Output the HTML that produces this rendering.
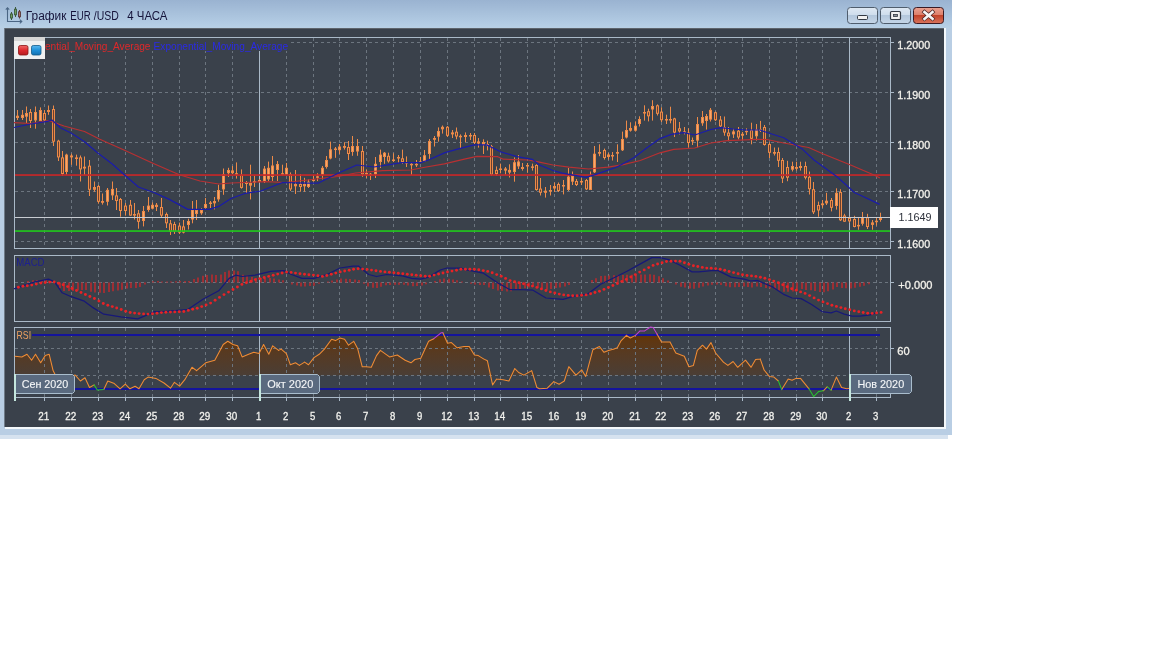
<!DOCTYPE html><html><head><meta charset="utf-8"><style>html,body{margin:0;padding:0;background:#fff;width:1152px;height:648px;overflow:hidden}svg{position:absolute;left:0;top:0;display:block;filter:blur(0.4px)}</style></head><body><svg width="1152" height="648" viewBox="0 0 1152 648"><defs><linearGradient id="tg" x1="0" y1="0" x2="0" y2="1"><stop offset="0" stop-color="#9ab3d1"/><stop offset="0.85" stop-color="#b3cce4"/><stop offset="1" stop-color="#b8d0e6"/></linearGradient><linearGradient id="bb" x1="0" y1="0" x2="0" y2="1"><stop offset="0" stop-color="#dfe9f3"/><stop offset="0.5" stop-color="#cddcec"/><stop offset="0.5" stop-color="#b3c7dc"/><stop offset="1" stop-color="#c5d6e8"/></linearGradient><linearGradient id="cb" x1="0" y1="0" x2="0" y2="1"><stop offset="0" stop-color="#eaa190"/><stop offset="0.5" stop-color="#dc7d68"/><stop offset="0.5" stop-color="#c2432a"/><stop offset="1" stop-color="#d9745c"/></linearGradient></defs><rect x="0" y="435" width="948" height="4" fill="#d6e2ef"/><rect x="0" y="0" width="952" height="435" fill="#b9cee4"/><rect x="0" y="0" width="952" height="28" fill="url(#tg)"/><rect x="944" y="28" width="2" height="401" fill="#f4f8fb"/><rect x="5" y="427" width="941" height="2" fill="#f4f8fb"/><rect x="5" y="28" width="939" height="399" fill="#3a414b"/><rect x="4" y="28" width="1" height="399" fill="#6f7b88"/><rect x="5" y="28" width="939" height="1" fill="#5d646c"/><rect x="847.5" y="7.5" width="30" height="16" rx="3" fill="url(#bb)" stroke="#4f5d6d" stroke-width="1"/><rect x="880.5" y="7.5" width="30" height="16" rx="3" fill="url(#bb)" stroke="#4f5d6d" stroke-width="1"/><rect x="913.5" y="7.5" width="30" height="16" rx="3" fill="url(#cb)" stroke="#3a1a22" stroke-width="1"/><rect x="857.5" y="15.5" width="10" height="4" rx="1" fill="#f2f2f2" stroke="#333a44" stroke-width="1"/><rect x="890.5" y="11.5" width="10" height="8" rx="1" fill="#f2f2f2" stroke="#333a44" stroke-width="1.2"/><rect x="893.5" y="14.5" width="4" height="2" fill="#8a9099" stroke="#333a44" stroke-width="0.8"/><path d="M924.5 12 L932.5 18.8 M932.5 12 L924.5 18.8" stroke="#4a2424" stroke-width="4" stroke-linecap="square"/><path d="M924.5 12 L932.5 18.8 M932.5 12 L924.5 18.8" stroke="#f6f6f6" stroke-width="2.6" stroke-linecap="square"/><path d="M7.5 8 V21.5 H21.5" fill="none" stroke="#4a6584" stroke-width="1.1"/><path d="M5.8 9.6 L7.5 7.7 L9.2 9.6 M19.8 19.7 L21.8 21.5 L19.8 23.3" fill="none" stroke="#4a6584" stroke-width="1.1"/><rect x="11" y="12" width="1" height="8" fill="#3d5a3d"/><rect x="10.5" y="14" width="2" height="4" fill="#6fa060" stroke="#3d5a3d" stroke-width="0.9"/><rect x="15" y="7" width="1" height="10" fill="#3d5a3d"/><rect x="14.5" y="9.2" width="2" height="5.6" fill="#6fa060" stroke="#3d5a3d" stroke-width="0.9"/><rect x="19" y="10" width="1" height="8.5" fill="#5a3a3a"/><rect x="18.5" y="11.8" width="2" height="5" fill="#b07068" stroke="#5a3a3a" stroke-width="0.9"/><text x="25.8" y="19.6" font-family="Liberation Sans" font-size="12" fill="#15133a" textLength="40.6" lengthAdjust="spacingAndGlyphs">График</text><text x="70.3" y="19.6" font-family="Liberation Sans" font-size="12" fill="#15133a" textLength="20.3" lengthAdjust="spacingAndGlyphs">EUR</text><text x="93.8" y="19.6" font-family="Liberation Sans" font-size="12" fill="#15133a" textLength="25" lengthAdjust="spacingAndGlyphs">/USD</text><text x="127.3" y="19.6" font-family="Liberation Sans" font-size="12" fill="#15133a" textLength="40.2" lengthAdjust="spacingAndGlyphs">4 ЧАСА</text><rect x="14.5" y="37.5" width="876" height="211" fill="none" stroke="#aab9c8" stroke-width="1"/><rect x="14.5" y="255.5" width="876" height="66" fill="none" stroke="#aab9c8" stroke-width="1"/><rect x="14.5" y="327.5" width="876" height="70" fill="none" stroke="#aab9c8" stroke-width="1"/><defs><linearGradient id="rg" gradientUnits="userSpaceOnUse" x1="0" y1="334" x2="0" y2="376"><stop offset="0" stop-color="#633508"/><stop offset="0.45" stop-color="#573a22"/><stop offset="1" stop-color="#4a3e36"/></linearGradient></defs><path d="M15.0 375.5 L15.0 356.2 L21.8 357.0 L27.0 354.3 L31.6 360.2 L35.5 354.3 L40.7 362.8 L45.2 355.6 L49.2 354.3 L53.1 370.6 L55.7 375.5 L62.0 375.5 L68.0 375.5 L75.2 375.1 L80.4 375.5 L85.0 375.5 L89.5 375.5 L94.1 375.5 L97.3 375.5 L103.8 375.5 L107.8 375.5 L114.3 375.5 L120.1 375.5 L125.3 375.5 L129.9 375.5 L135.1 375.5 L139.0 375.5 L144.2 375.5 L148.1 375.5 L155.9 375.5 L164.0 375.5 L170.5 375.5 L174.4 375.5 L179.6 375.5 L184.8 375.5 L192.0 367.3 L196.6 370.6 L205.7 362.8 L214.8 360.2 L223.2 344.5 L227.8 341.3 L233.0 344.5 L237.6 345.8 L242.1 356.9 L248.6 354.3 L253.8 352.3 L259.0 353.6 L263.6 344.5 L268.8 354.3 L272.7 345.8 L278.6 350.4 L281.2 349.1 L286.4 353.6 L290.3 364.7 L295.5 362.8 L299.4 365.4 L304.6 362.1 L308.5 364.7 L314.0 357.6 L319.2 354.3 L324.4 349.1 L331.6 339.3 L335.5 340.6 L340.0 338.0 L344.6 339.3 L348.5 345.2 L353.7 341.3 L357.6 348.4 L362.2 366.7 L366.1 366.7 L371.3 367.3 L376.5 355.6 L380.4 350.4 L389.5 356.9 L397.3 355.0 L405.1 360.2 L411.0 362.8 L414.9 359.5 L420.8 358.2 L428.6 341.3 L433.8 338.7 L441.0 334.8 L442.9 334.8 L447.5 343.2 L451.4 342.6 L457.2 347.8 L464.0 346.5 L469.2 346.5 L474.4 355.0 L478.3 355.6 L483.5 358.9 L487.4 360.8 L492.6 375.5 L496.6 375.5 L503.1 375.5 L508.9 375.5 L514.8 368.6 L518.7 372.5 L523.9 375.1 L531.7 370.6 L536.9 375.5 L539.5 375.5 L547.3 375.5 L553.8 375.5 L559.1 375.5 L564.3 375.5 L568.8 366.7 L576.0 375.1 L581.8 369.9 L585.7 375.5 L592.9 349.7 L599.4 346.5 L604.0 352.3 L608.5 350.4 L614.0 349.1 L617.3 347.8 L621.2 340.6 L626.4 335.4 L630.3 338.0 L635.5 335.4 L640.0 334.8 L644.6 334.8 L650.5 334.8 L653.1 334.8 L657.0 334.8 L661.5 341.9 L670.0 341.9 L675.8 353.0 L684.3 356.3 L688.9 366.7 L693.4 365.4 L697.3 350.4 L702.5 345.2 L706.4 349.1 L711.0 342.6 L715.6 353.0 L723.4 362.1 L727.9 365.4 L733.1 361.5 L737.7 367.3 L745.5 360.2 L751.1 367.3 L755.6 359.5 L760.2 358.9 L764.1 370.0 L769.3 375.5 L773.9 375.5 L778.4 375.5 L781.7 375.5 L788.2 375.5 L792.1 375.5 L796.0 375.5 L800.5 375.5 L805.8 375.5 L809.0 375.5 L813.6 375.5 L818.8 375.5 L823.3 375.5 L827.2 375.5 L831.1 375.5 L836.4 375.5 L841.6 375.5 L846.8 375.5 L852.0 375.5 L860.0 375.5 L868.0 375.5 L874.0 375.5 L878.0 375.5 L878.0 375.5 Z" fill="url(#rg)"/><line x1="15" y1="42.5" x2="890" y2="42.5" stroke="#6c757f" stroke-dasharray="3,3"/><line x1="15" y1="92.5" x2="890" y2="92.5" stroke="#6c757f" stroke-dasharray="3,3"/><line x1="15" y1="142.5" x2="890" y2="142.5" stroke="#6c757f" stroke-dasharray="3,3"/><line x1="15" y1="191.5" x2="890" y2="191.5" stroke="#6c757f" stroke-dasharray="3,3"/><line x1="15" y1="241.5" x2="890" y2="241.5" stroke="#6c757f" stroke-dasharray="3,3"/><line x1="15" y1="282.5" x2="890" y2="282.5" stroke="#6c757f" stroke-dasharray="3,3"/><line x1="15" y1="348.5" x2="890" y2="348.5" stroke="#6c757f" stroke-dasharray="3,3"/><line x1="15" y1="375.5" x2="890" y2="375.5" stroke="#6c757f" stroke-dasharray="3,3"/><line x1="44.5" y1="38" x2="44.5" y2="248" stroke="#6c757f" stroke-dasharray="3,3"/><line x1="44.5" y1="256" x2="44.5" y2="321" stroke="#6c757f" stroke-dasharray="3,3"/><line x1="44.5" y1="328" x2="44.5" y2="397" stroke="#6c757f" stroke-dasharray="3,3"/><line x1="44.5" y1="397" x2="44.5" y2="401" stroke="#aab9c8"/><text x="43.7" y="420.3" text-anchor="middle" font-family="Liberation Sans" font-size="11" fill="#f2f2ee" stroke="#f2f2ee" stroke-width="0.3" textLength="11.0" lengthAdjust="spacingAndGlyphs">21</text><line x1="71.5" y1="38" x2="71.5" y2="248" stroke="#6c757f" stroke-dasharray="3,3"/><line x1="71.5" y1="256" x2="71.5" y2="321" stroke="#6c757f" stroke-dasharray="3,3"/><line x1="71.5" y1="328" x2="71.5" y2="397" stroke="#6c757f" stroke-dasharray="3,3"/><line x1="71.5" y1="397" x2="71.5" y2="401" stroke="#aab9c8"/><text x="70.7" y="420.3" text-anchor="middle" font-family="Liberation Sans" font-size="11" fill="#f2f2ee" stroke="#f2f2ee" stroke-width="0.3" textLength="11.0" lengthAdjust="spacingAndGlyphs">22</text><line x1="98.5" y1="38" x2="98.5" y2="248" stroke="#6c757f" stroke-dasharray="3,3"/><line x1="98.5" y1="256" x2="98.5" y2="321" stroke="#6c757f" stroke-dasharray="3,3"/><line x1="98.5" y1="328" x2="98.5" y2="397" stroke="#6c757f" stroke-dasharray="3,3"/><line x1="98.5" y1="397" x2="98.5" y2="401" stroke="#aab9c8"/><text x="97.7" y="420.3" text-anchor="middle" font-family="Liberation Sans" font-size="11" fill="#f2f2ee" stroke="#f2f2ee" stroke-width="0.3" textLength="11.0" lengthAdjust="spacingAndGlyphs">23</text><line x1="125.5" y1="38" x2="125.5" y2="248" stroke="#6c757f" stroke-dasharray="3,3"/><line x1="125.5" y1="256" x2="125.5" y2="321" stroke="#6c757f" stroke-dasharray="3,3"/><line x1="125.5" y1="328" x2="125.5" y2="397" stroke="#6c757f" stroke-dasharray="3,3"/><line x1="125.5" y1="397" x2="125.5" y2="401" stroke="#aab9c8"/><text x="124.7" y="420.3" text-anchor="middle" font-family="Liberation Sans" font-size="11" fill="#f2f2ee" stroke="#f2f2ee" stroke-width="0.3" textLength="11.0" lengthAdjust="spacingAndGlyphs">24</text><line x1="152.5" y1="38" x2="152.5" y2="248" stroke="#6c757f" stroke-dasharray="3,3"/><line x1="152.5" y1="256" x2="152.5" y2="321" stroke="#6c757f" stroke-dasharray="3,3"/><line x1="152.5" y1="328" x2="152.5" y2="397" stroke="#6c757f" stroke-dasharray="3,3"/><line x1="152.5" y1="397" x2="152.5" y2="401" stroke="#aab9c8"/><text x="151.7" y="420.3" text-anchor="middle" font-family="Liberation Sans" font-size="11" fill="#f2f2ee" stroke="#f2f2ee" stroke-width="0.3" textLength="11.0" lengthAdjust="spacingAndGlyphs">25</text><line x1="179.5" y1="38" x2="179.5" y2="248" stroke="#6c757f" stroke-dasharray="3,3"/><line x1="179.5" y1="256" x2="179.5" y2="321" stroke="#6c757f" stroke-dasharray="3,3"/><line x1="179.5" y1="328" x2="179.5" y2="397" stroke="#6c757f" stroke-dasharray="3,3"/><line x1="179.5" y1="397" x2="179.5" y2="401" stroke="#aab9c8"/><text x="178.7" y="420.3" text-anchor="middle" font-family="Liberation Sans" font-size="11" fill="#f2f2ee" stroke="#f2f2ee" stroke-width="0.3" textLength="11.0" lengthAdjust="spacingAndGlyphs">28</text><line x1="205.5" y1="38" x2="205.5" y2="248" stroke="#6c757f" stroke-dasharray="3,3"/><line x1="205.5" y1="256" x2="205.5" y2="321" stroke="#6c757f" stroke-dasharray="3,3"/><line x1="205.5" y1="328" x2="205.5" y2="397" stroke="#6c757f" stroke-dasharray="3,3"/><line x1="205.5" y1="397" x2="205.5" y2="401" stroke="#aab9c8"/><text x="204.7" y="420.3" text-anchor="middle" font-family="Liberation Sans" font-size="11" fill="#f2f2ee" stroke="#f2f2ee" stroke-width="0.3" textLength="11.0" lengthAdjust="spacingAndGlyphs">29</text><line x1="232.5" y1="38" x2="232.5" y2="248" stroke="#6c757f" stroke-dasharray="3,3"/><line x1="232.5" y1="256" x2="232.5" y2="321" stroke="#6c757f" stroke-dasharray="3,3"/><line x1="232.5" y1="328" x2="232.5" y2="397" stroke="#6c757f" stroke-dasharray="3,3"/><line x1="232.5" y1="397" x2="232.5" y2="401" stroke="#aab9c8"/><text x="231.7" y="420.3" text-anchor="middle" font-family="Liberation Sans" font-size="11" fill="#f2f2ee" stroke="#f2f2ee" stroke-width="0.3" textLength="11.0" lengthAdjust="spacingAndGlyphs">30</text><line x1="259.5" y1="38" x2="259.5" y2="248" stroke="#aab9c8" stroke-width="1"/><line x1="259.5" y1="256" x2="259.5" y2="321" stroke="#aab9c8" stroke-width="1"/><line x1="259.5" y1="328" x2="259.5" y2="397" stroke="#aab9c8" stroke-width="1"/><line x1="259.5" y1="397" x2="259.5" y2="401" stroke="#aab9c8"/><text x="258.7" y="420.3" text-anchor="middle" font-family="Liberation Sans" font-size="11" fill="#f2f2ee" stroke="#f2f2ee" stroke-width="0.3" textLength="5.3" lengthAdjust="spacingAndGlyphs">1</text><line x1="286.5" y1="38" x2="286.5" y2="248" stroke="#6c757f" stroke-dasharray="3,3"/><line x1="286.5" y1="256" x2="286.5" y2="321" stroke="#6c757f" stroke-dasharray="3,3"/><line x1="286.5" y1="328" x2="286.5" y2="397" stroke="#6c757f" stroke-dasharray="3,3"/><line x1="286.5" y1="397" x2="286.5" y2="401" stroke="#aab9c8"/><text x="285.7" y="420.3" text-anchor="middle" font-family="Liberation Sans" font-size="11" fill="#f2f2ee" stroke="#f2f2ee" stroke-width="0.3" textLength="5.3" lengthAdjust="spacingAndGlyphs">2</text><line x1="313.5" y1="38" x2="313.5" y2="248" stroke="#6c757f" stroke-dasharray="3,3"/><line x1="313.5" y1="256" x2="313.5" y2="321" stroke="#6c757f" stroke-dasharray="3,3"/><line x1="313.5" y1="328" x2="313.5" y2="397" stroke="#6c757f" stroke-dasharray="3,3"/><line x1="313.5" y1="397" x2="313.5" y2="401" stroke="#aab9c8"/><text x="312.7" y="420.3" text-anchor="middle" font-family="Liberation Sans" font-size="11" fill="#f2f2ee" stroke="#f2f2ee" stroke-width="0.3" textLength="5.3" lengthAdjust="spacingAndGlyphs">5</text><line x1="339.5" y1="38" x2="339.5" y2="248" stroke="#6c757f" stroke-dasharray="3,3"/><line x1="339.5" y1="256" x2="339.5" y2="321" stroke="#6c757f" stroke-dasharray="3,3"/><line x1="339.5" y1="328" x2="339.5" y2="397" stroke="#6c757f" stroke-dasharray="3,3"/><line x1="339.5" y1="397" x2="339.5" y2="401" stroke="#aab9c8"/><text x="338.7" y="420.3" text-anchor="middle" font-family="Liberation Sans" font-size="11" fill="#f2f2ee" stroke="#f2f2ee" stroke-width="0.3" textLength="5.3" lengthAdjust="spacingAndGlyphs">6</text><line x1="366.5" y1="38" x2="366.5" y2="248" stroke="#6c757f" stroke-dasharray="3,3"/><line x1="366.5" y1="256" x2="366.5" y2="321" stroke="#6c757f" stroke-dasharray="3,3"/><line x1="366.5" y1="328" x2="366.5" y2="397" stroke="#6c757f" stroke-dasharray="3,3"/><line x1="366.5" y1="397" x2="366.5" y2="401" stroke="#aab9c8"/><text x="365.7" y="420.3" text-anchor="middle" font-family="Liberation Sans" font-size="11" fill="#f2f2ee" stroke="#f2f2ee" stroke-width="0.3" textLength="5.3" lengthAdjust="spacingAndGlyphs">7</text><line x1="393.5" y1="38" x2="393.5" y2="248" stroke="#6c757f" stroke-dasharray="3,3"/><line x1="393.5" y1="256" x2="393.5" y2="321" stroke="#6c757f" stroke-dasharray="3,3"/><line x1="393.5" y1="328" x2="393.5" y2="397" stroke="#6c757f" stroke-dasharray="3,3"/><line x1="393.5" y1="397" x2="393.5" y2="401" stroke="#aab9c8"/><text x="392.7" y="420.3" text-anchor="middle" font-family="Liberation Sans" font-size="11" fill="#f2f2ee" stroke="#f2f2ee" stroke-width="0.3" textLength="5.3" lengthAdjust="spacingAndGlyphs">8</text><line x1="420.5" y1="38" x2="420.5" y2="248" stroke="#6c757f" stroke-dasharray="3,3"/><line x1="420.5" y1="256" x2="420.5" y2="321" stroke="#6c757f" stroke-dasharray="3,3"/><line x1="420.5" y1="328" x2="420.5" y2="397" stroke="#6c757f" stroke-dasharray="3,3"/><line x1="420.5" y1="397" x2="420.5" y2="401" stroke="#aab9c8"/><text x="419.7" y="420.3" text-anchor="middle" font-family="Liberation Sans" font-size="11" fill="#f2f2ee" stroke="#f2f2ee" stroke-width="0.3" textLength="5.3" lengthAdjust="spacingAndGlyphs">9</text><line x1="447.5" y1="38" x2="447.5" y2="248" stroke="#6c757f" stroke-dasharray="3,3"/><line x1="447.5" y1="256" x2="447.5" y2="321" stroke="#6c757f" stroke-dasharray="3,3"/><line x1="447.5" y1="328" x2="447.5" y2="397" stroke="#6c757f" stroke-dasharray="3,3"/><line x1="447.5" y1="397" x2="447.5" y2="401" stroke="#aab9c8"/><text x="446.7" y="420.3" text-anchor="middle" font-family="Liberation Sans" font-size="11" fill="#f2f2ee" stroke="#f2f2ee" stroke-width="0.3" textLength="11.0" lengthAdjust="spacingAndGlyphs">12</text><line x1="474.5" y1="38" x2="474.5" y2="248" stroke="#6c757f" stroke-dasharray="3,3"/><line x1="474.5" y1="256" x2="474.5" y2="321" stroke="#6c757f" stroke-dasharray="3,3"/><line x1="474.5" y1="328" x2="474.5" y2="397" stroke="#6c757f" stroke-dasharray="3,3"/><line x1="474.5" y1="397" x2="474.5" y2="401" stroke="#aab9c8"/><text x="473.7" y="420.3" text-anchor="middle" font-family="Liberation Sans" font-size="11" fill="#f2f2ee" stroke="#f2f2ee" stroke-width="0.3" textLength="11.0" lengthAdjust="spacingAndGlyphs">13</text><line x1="500.5" y1="38" x2="500.5" y2="248" stroke="#6c757f" stroke-dasharray="3,3"/><line x1="500.5" y1="256" x2="500.5" y2="321" stroke="#6c757f" stroke-dasharray="3,3"/><line x1="500.5" y1="328" x2="500.5" y2="397" stroke="#6c757f" stroke-dasharray="3,3"/><line x1="500.5" y1="397" x2="500.5" y2="401" stroke="#aab9c8"/><text x="499.7" y="420.3" text-anchor="middle" font-family="Liberation Sans" font-size="11" fill="#f2f2ee" stroke="#f2f2ee" stroke-width="0.3" textLength="11.0" lengthAdjust="spacingAndGlyphs">14</text><line x1="527.5" y1="38" x2="527.5" y2="248" stroke="#6c757f" stroke-dasharray="3,3"/><line x1="527.5" y1="256" x2="527.5" y2="321" stroke="#6c757f" stroke-dasharray="3,3"/><line x1="527.5" y1="328" x2="527.5" y2="397" stroke="#6c757f" stroke-dasharray="3,3"/><line x1="527.5" y1="397" x2="527.5" y2="401" stroke="#aab9c8"/><text x="526.7" y="420.3" text-anchor="middle" font-family="Liberation Sans" font-size="11" fill="#f2f2ee" stroke="#f2f2ee" stroke-width="0.3" textLength="11.0" lengthAdjust="spacingAndGlyphs">15</text><line x1="554.5" y1="38" x2="554.5" y2="248" stroke="#6c757f" stroke-dasharray="3,3"/><line x1="554.5" y1="256" x2="554.5" y2="321" stroke="#6c757f" stroke-dasharray="3,3"/><line x1="554.5" y1="328" x2="554.5" y2="397" stroke="#6c757f" stroke-dasharray="3,3"/><line x1="554.5" y1="397" x2="554.5" y2="401" stroke="#aab9c8"/><text x="553.7" y="420.3" text-anchor="middle" font-family="Liberation Sans" font-size="11" fill="#f2f2ee" stroke="#f2f2ee" stroke-width="0.3" textLength="11.0" lengthAdjust="spacingAndGlyphs">16</text><line x1="581.5" y1="38" x2="581.5" y2="248" stroke="#6c757f" stroke-dasharray="3,3"/><line x1="581.5" y1="256" x2="581.5" y2="321" stroke="#6c757f" stroke-dasharray="3,3"/><line x1="581.5" y1="328" x2="581.5" y2="397" stroke="#6c757f" stroke-dasharray="3,3"/><line x1="581.5" y1="397" x2="581.5" y2="401" stroke="#aab9c8"/><text x="580.7" y="420.3" text-anchor="middle" font-family="Liberation Sans" font-size="11" fill="#f2f2ee" stroke="#f2f2ee" stroke-width="0.3" textLength="11.0" lengthAdjust="spacingAndGlyphs">19</text><line x1="608.5" y1="38" x2="608.5" y2="248" stroke="#6c757f" stroke-dasharray="3,3"/><line x1="608.5" y1="256" x2="608.5" y2="321" stroke="#6c757f" stroke-dasharray="3,3"/><line x1="608.5" y1="328" x2="608.5" y2="397" stroke="#6c757f" stroke-dasharray="3,3"/><line x1="608.5" y1="397" x2="608.5" y2="401" stroke="#aab9c8"/><text x="607.7" y="420.3" text-anchor="middle" font-family="Liberation Sans" font-size="11" fill="#f2f2ee" stroke="#f2f2ee" stroke-width="0.3" textLength="11.0" lengthAdjust="spacingAndGlyphs">20</text><line x1="635.5" y1="38" x2="635.5" y2="248" stroke="#6c757f" stroke-dasharray="3,3"/><line x1="635.5" y1="256" x2="635.5" y2="321" stroke="#6c757f" stroke-dasharray="3,3"/><line x1="635.5" y1="328" x2="635.5" y2="397" stroke="#6c757f" stroke-dasharray="3,3"/><line x1="635.5" y1="397" x2="635.5" y2="401" stroke="#aab9c8"/><text x="634.7" y="420.3" text-anchor="middle" font-family="Liberation Sans" font-size="11" fill="#f2f2ee" stroke="#f2f2ee" stroke-width="0.3" textLength="11.0" lengthAdjust="spacingAndGlyphs">21</text><line x1="661.5" y1="38" x2="661.5" y2="248" stroke="#6c757f" stroke-dasharray="3,3"/><line x1="661.5" y1="256" x2="661.5" y2="321" stroke="#6c757f" stroke-dasharray="3,3"/><line x1="661.5" y1="328" x2="661.5" y2="397" stroke="#6c757f" stroke-dasharray="3,3"/><line x1="661.5" y1="397" x2="661.5" y2="401" stroke="#aab9c8"/><text x="660.7" y="420.3" text-anchor="middle" font-family="Liberation Sans" font-size="11" fill="#f2f2ee" stroke="#f2f2ee" stroke-width="0.3" textLength="11.0" lengthAdjust="spacingAndGlyphs">22</text><line x1="688.5" y1="38" x2="688.5" y2="248" stroke="#6c757f" stroke-dasharray="3,3"/><line x1="688.5" y1="256" x2="688.5" y2="321" stroke="#6c757f" stroke-dasharray="3,3"/><line x1="688.5" y1="328" x2="688.5" y2="397" stroke="#6c757f" stroke-dasharray="3,3"/><line x1="688.5" y1="397" x2="688.5" y2="401" stroke="#aab9c8"/><text x="687.7" y="420.3" text-anchor="middle" font-family="Liberation Sans" font-size="11" fill="#f2f2ee" stroke="#f2f2ee" stroke-width="0.3" textLength="11.0" lengthAdjust="spacingAndGlyphs">23</text><line x1="715.5" y1="38" x2="715.5" y2="248" stroke="#6c757f" stroke-dasharray="3,3"/><line x1="715.5" y1="256" x2="715.5" y2="321" stroke="#6c757f" stroke-dasharray="3,3"/><line x1="715.5" y1="328" x2="715.5" y2="397" stroke="#6c757f" stroke-dasharray="3,3"/><line x1="715.5" y1="397" x2="715.5" y2="401" stroke="#aab9c8"/><text x="714.7" y="420.3" text-anchor="middle" font-family="Liberation Sans" font-size="11" fill="#f2f2ee" stroke="#f2f2ee" stroke-width="0.3" textLength="11.0" lengthAdjust="spacingAndGlyphs">26</text><line x1="742.5" y1="38" x2="742.5" y2="248" stroke="#6c757f" stroke-dasharray="3,3"/><line x1="742.5" y1="256" x2="742.5" y2="321" stroke="#6c757f" stroke-dasharray="3,3"/><line x1="742.5" y1="328" x2="742.5" y2="397" stroke="#6c757f" stroke-dasharray="3,3"/><line x1="742.5" y1="397" x2="742.5" y2="401" stroke="#aab9c8"/><text x="741.7" y="420.3" text-anchor="middle" font-family="Liberation Sans" font-size="11" fill="#f2f2ee" stroke="#f2f2ee" stroke-width="0.3" textLength="11.0" lengthAdjust="spacingAndGlyphs">27</text><line x1="769.5" y1="38" x2="769.5" y2="248" stroke="#6c757f" stroke-dasharray="3,3"/><line x1="769.5" y1="256" x2="769.5" y2="321" stroke="#6c757f" stroke-dasharray="3,3"/><line x1="769.5" y1="328" x2="769.5" y2="397" stroke="#6c757f" stroke-dasharray="3,3"/><line x1="769.5" y1="397" x2="769.5" y2="401" stroke="#aab9c8"/><text x="768.7" y="420.3" text-anchor="middle" font-family="Liberation Sans" font-size="11" fill="#f2f2ee" stroke="#f2f2ee" stroke-width="0.3" textLength="11.0" lengthAdjust="spacingAndGlyphs">28</text><line x1="796.5" y1="38" x2="796.5" y2="248" stroke="#6c757f" stroke-dasharray="3,3"/><line x1="796.5" y1="256" x2="796.5" y2="321" stroke="#6c757f" stroke-dasharray="3,3"/><line x1="796.5" y1="328" x2="796.5" y2="397" stroke="#6c757f" stroke-dasharray="3,3"/><line x1="796.5" y1="397" x2="796.5" y2="401" stroke="#aab9c8"/><text x="795.7" y="420.3" text-anchor="middle" font-family="Liberation Sans" font-size="11" fill="#f2f2ee" stroke="#f2f2ee" stroke-width="0.3" textLength="11.0" lengthAdjust="spacingAndGlyphs">29</text><line x1="822.5" y1="38" x2="822.5" y2="248" stroke="#6c757f" stroke-dasharray="3,3"/><line x1="822.5" y1="256" x2="822.5" y2="321" stroke="#6c757f" stroke-dasharray="3,3"/><line x1="822.5" y1="328" x2="822.5" y2="397" stroke="#6c757f" stroke-dasharray="3,3"/><line x1="822.5" y1="397" x2="822.5" y2="401" stroke="#aab9c8"/><text x="821.7" y="420.3" text-anchor="middle" font-family="Liberation Sans" font-size="11" fill="#f2f2ee" stroke="#f2f2ee" stroke-width="0.3" textLength="11.0" lengthAdjust="spacingAndGlyphs">30</text><line x1="849.5" y1="38" x2="849.5" y2="248" stroke="#aab9c8" stroke-width="1"/><line x1="849.5" y1="256" x2="849.5" y2="321" stroke="#aab9c8" stroke-width="1"/><line x1="849.5" y1="328" x2="849.5" y2="397" stroke="#aab9c8" stroke-width="1"/><line x1="849.5" y1="397" x2="849.5" y2="401" stroke="#aab9c8"/><text x="848.7" y="420.3" text-anchor="middle" font-family="Liberation Sans" font-size="11" fill="#f2f2ee" stroke="#f2f2ee" stroke-width="0.3" textLength="5.3" lengthAdjust="spacingAndGlyphs">2</text><line x1="876.5" y1="38" x2="876.5" y2="248" stroke="#6c757f" stroke-dasharray="3,3"/><line x1="876.5" y1="256" x2="876.5" y2="321" stroke="#6c757f" stroke-dasharray="3,3"/><line x1="876.5" y1="328" x2="876.5" y2="397" stroke="#6c757f" stroke-dasharray="3,3"/><line x1="876.5" y1="397" x2="876.5" y2="401" stroke="#aab9c8"/><text x="875.7" y="420.3" text-anchor="middle" font-family="Liberation Sans" font-size="11" fill="#f2f2ee" stroke="#f2f2ee" stroke-width="0.3" textLength="5.3" lengthAdjust="spacingAndGlyphs">3</text><line x1="890" y1="42.5" x2="894" y2="42.5" stroke="#aab9c8"/><text x="897.3" y="48.9" font-family="Liberation Sans" font-size="11.2" fill="#f4f2ec" stroke="#f4f2ec" stroke-width="0.3" textLength="32.8" lengthAdjust="spacingAndGlyphs">1.2000</text><line x1="890" y1="92.5" x2="894" y2="92.5" stroke="#aab9c8"/><text x="897.3" y="98.9" font-family="Liberation Sans" font-size="11.2" fill="#f4f2ec" stroke="#f4f2ec" stroke-width="0.3" textLength="32.8" lengthAdjust="spacingAndGlyphs">1.1900</text><line x1="890" y1="142.5" x2="894" y2="142.5" stroke="#aab9c8"/><text x="897.3" y="148.9" font-family="Liberation Sans" font-size="11.2" fill="#f4f2ec" stroke="#f4f2ec" stroke-width="0.3" textLength="32.8" lengthAdjust="spacingAndGlyphs">1.1800</text><line x1="890" y1="191.5" x2="894" y2="191.5" stroke="#aab9c8"/><text x="897.3" y="197.9" font-family="Liberation Sans" font-size="11.2" fill="#f4f2ec" stroke="#f4f2ec" stroke-width="0.3" textLength="32.8" lengthAdjust="spacingAndGlyphs">1.1700</text><line x1="890" y1="241.5" x2="894" y2="241.5" stroke="#aab9c8"/><text x="897.3" y="247.9" font-family="Liberation Sans" font-size="11.2" fill="#f4f2ec" stroke="#f4f2ec" stroke-width="0.3" textLength="32.8" lengthAdjust="spacingAndGlyphs">1.1600</text><line x1="890" y1="282.5" x2="894" y2="282.5" stroke="#aab9c8"/><text x="898.3" y="288.9" font-family="Liberation Sans" font-size="11.2" fill="#f4f2ec" stroke="#f4f2ec" stroke-width="0.3" textLength="34.2" lengthAdjust="spacingAndGlyphs">+0.000</text><line x1="890" y1="348.5" x2="894" y2="348.5" stroke="#aab9c8"/><text x="897.2" y="354.9" font-family="Liberation Sans" font-size="11.2" fill="#f4f2ec" stroke="#f4f2ec" stroke-width="0.3" textLength="12.4" lengthAdjust="spacingAndGlyphs">60</text><rect x="890" y="207" width="48" height="21" fill="#ffffff"/><text x="898.5" y="220.9" font-family="Liberation Sans" font-size="11.2" fill="#2c303a" textLength="33" lengthAdjust="spacingAndGlyphs">1.1649</text><rect x="17" y="110.0" width="1" height="10.0" fill="#ec8a48"/><rect x="16" y="115.7" width="3" height="2.3" fill="#ec8a48"/><rect x="22" y="110.0" width="1" height="10.0" fill="#ec8a48"/><rect x="21" y="114.8" width="3" height="3.2" fill="#ec8a48"/><rect x="22" y="115.8" width="1" height="1.2" fill="#f7a86c"/><rect x="26" y="106.5" width="1" height="16.5" fill="#ec8a48"/><rect x="25" y="113.0" width="3" height="3.7" fill="#ec8a48"/><rect x="26" y="114.0" width="1" height="1.7" fill="#f7a86c"/><rect x="30" y="109.0" width="1" height="19.0" fill="#ec8a48"/><rect x="29" y="112.0" width="3" height="9.0" fill="#ec8a48"/><rect x="30" y="113.0" width="1" height="7.0" fill="#6a4030"/><rect x="35" y="106.5" width="1" height="22.2" fill="#ec8a48"/><rect x="34" y="112.0" width="3" height="8.4" fill="#ec8a48"/><rect x="35" y="113.0" width="1" height="6.4" fill="#f7a86c"/><rect x="40" y="107.4" width="1" height="13.6" fill="#ec8a48"/><rect x="39" y="110.0" width="3" height="11.0" fill="#ec8a48"/><rect x="40" y="111.0" width="1" height="9.0" fill="#f7a86c"/><rect x="44" y="110.0" width="1" height="11.0" fill="#ec8a48"/><rect x="43" y="113.0" width="3" height="7.4" fill="#ec8a48"/><rect x="44" y="114.0" width="1" height="5.4" fill="#6a4030"/><rect x="48" y="105.5" width="1" height="9.3" fill="#ec8a48"/><rect x="47" y="110.0" width="3" height="2.0" fill="#ec8a48"/><rect x="53" y="105.5" width="1" height="40.5" fill="#ec8a48"/><rect x="52" y="109.0" width="3" height="32.7" fill="#ec8a48"/><rect x="53" y="110.0" width="1" height="30.7" fill="#6a4030"/><rect x="58" y="139.8" width="1" height="21.2" fill="#ec8a48"/><rect x="57" y="140.7" width="3" height="16.7" fill="#ec8a48"/><rect x="58" y="141.7" width="1" height="14.7" fill="#6a4030"/><rect x="62" y="151.0" width="1" height="25.0" fill="#ec8a48"/><rect x="61" y="157.4" width="3" height="16.6" fill="#ec8a48"/><rect x="62" y="158.4" width="1" height="14.6" fill="#6a4030"/><rect x="66" y="153.7" width="1" height="21.3" fill="#ec8a48"/><rect x="65" y="154.6" width="3" height="17.4" fill="#ec8a48"/><rect x="66" y="155.6" width="1" height="15.4" fill="#f7a86c"/><rect x="71" y="153.7" width="1" height="11.1" fill="#ec8a48"/><rect x="70" y="155.5" width="3" height="1.9" fill="#ec8a48"/><rect x="76" y="154.6" width="1" height="11.1" fill="#ec8a48"/><rect x="75" y="157.4" width="3" height="1.6" fill="#ec8a48"/><rect x="80" y="155.5" width="1" height="26.0" fill="#ec8a48"/><rect x="79" y="157.4" width="3" height="12.0" fill="#ec8a48"/><rect x="80" y="158.4" width="1" height="10.0" fill="#6a4030"/><rect x="84" y="156.5" width="1" height="18.5" fill="#ec8a48"/><rect x="83" y="166.7" width="3" height="1.8" fill="#ec8a48"/><rect x="89" y="160.0" width="1" height="36.0" fill="#ec8a48"/><rect x="88" y="165.7" width="3" height="24.1" fill="#ec8a48"/><rect x="89" y="166.7" width="1" height="22.1" fill="#6a4030"/><rect x="94" y="181.5" width="1" height="10.2" fill="#ec8a48"/><rect x="93" y="187.0" width="3" height="2.8" fill="#ec8a48"/><rect x="98" y="185.0" width="1" height="18.7" fill="#ec8a48"/><rect x="97" y="186.0" width="3" height="15.8" fill="#ec8a48"/><rect x="98" y="187.0" width="1" height="13.8" fill="#6a4030"/><rect x="102" y="193.5" width="1" height="11.1" fill="#ec8a48"/><rect x="101" y="201.0" width="3" height="1.8" fill="#ec8a48"/><rect x="107" y="188.0" width="1" height="17.5" fill="#ec8a48"/><rect x="106" y="189.8" width="3" height="12.0" fill="#ec8a48"/><rect x="107" y="190.8" width="1" height="10.0" fill="#f7a86c"/><rect x="112" y="181.5" width="1" height="18.5" fill="#ec8a48"/><rect x="111" y="188.9" width="3" height="6.5" fill="#ec8a48"/><rect x="112" y="189.9" width="1" height="4.5" fill="#f7a86c"/><rect x="116" y="188.0" width="1" height="22.0" fill="#ec8a48"/><rect x="115" y="195.4" width="3" height="5.6" fill="#ec8a48"/><rect x="116" y="196.4" width="1" height="3.6" fill="#6a4030"/><rect x="120" y="198.0" width="1" height="18.7" fill="#ec8a48"/><rect x="119" y="199.0" width="3" height="12.0" fill="#ec8a48"/><rect x="120" y="200.0" width="1" height="10.0" fill="#6a4030"/><rect x="125" y="203.0" width="1" height="12.6" fill="#ec8a48"/><rect x="124" y="205.6" width="3" height="5.4" fill="#ec8a48"/><rect x="125" y="206.6" width="1" height="3.4" fill="#6a4030"/><rect x="130" y="200.0" width="1" height="15.6" fill="#ec8a48"/><rect x="129" y="204.8" width="3" height="10.8" fill="#ec8a48"/><rect x="130" y="205.8" width="1" height="8.8" fill="#6a4030"/><rect x="134" y="203.0" width="1" height="16.5" fill="#ec8a48"/><rect x="133" y="214.0" width="3" height="1.6" fill="#ec8a48"/><rect x="138" y="210.0" width="1" height="18.7" fill="#ec8a48"/><rect x="137" y="213.3" width="3" height="8.5" fill="#ec8a48"/><rect x="138" y="214.3" width="1" height="6.5" fill="#6a4030"/><rect x="143" y="206.0" width="1" height="20.4" fill="#ec8a48"/><rect x="142" y="211.0" width="3" height="10.0" fill="#ec8a48"/><rect x="143" y="212.0" width="1" height="8.0" fill="#f7a86c"/><rect x="148" y="197.0" width="1" height="14.8" fill="#ec8a48"/><rect x="147" y="205.6" width="3" height="4.4" fill="#ec8a48"/><rect x="148" y="206.6" width="1" height="2.4" fill="#f7a86c"/><rect x="152" y="202.5" width="1" height="6.9" fill="#ec8a48"/><rect x="151" y="204.8" width="3" height="3.9" fill="#ec8a48"/><rect x="152" y="205.8" width="1" height="1.9" fill="#f7a86c"/><rect x="156" y="203.0" width="1" height="8.0" fill="#ec8a48"/><rect x="155" y="204.8" width="3" height="2.2" fill="#ec8a48"/><rect x="161" y="198.0" width="1" height="19.0" fill="#ec8a48"/><rect x="160" y="207.0" width="3" height="8.6" fill="#ec8a48"/><rect x="161" y="208.0" width="1" height="6.6" fill="#6a4030"/><rect x="166" y="212.5" width="1" height="15.5" fill="#ec8a48"/><rect x="165" y="214.0" width="3" height="9.3" fill="#ec8a48"/><rect x="166" y="215.0" width="1" height="7.3" fill="#6a4030"/><rect x="170" y="220.0" width="1" height="15.0" fill="#ec8a48"/><rect x="169" y="223.3" width="3" height="8.5" fill="#ec8a48"/><rect x="170" y="224.3" width="1" height="6.5" fill="#6a4030"/><rect x="174" y="221.8" width="1" height="12.2" fill="#ec8a48"/><rect x="173" y="224.0" width="3" height="7.8" fill="#ec8a48"/><rect x="174" y="225.0" width="1" height="5.8" fill="#6a4030"/><rect x="179" y="222.6" width="1" height="11.4" fill="#ec8a48"/><rect x="178" y="225.6" width="3" height="7.0" fill="#ec8a48"/><rect x="179" y="226.6" width="1" height="5.0" fill="#6a4030"/><rect x="183" y="220.0" width="1" height="13.4" fill="#ec8a48"/><rect x="182" y="226.4" width="3" height="6.2" fill="#ec8a48"/><rect x="183" y="227.4" width="1" height="4.2" fill="#6a4030"/><rect x="188" y="218.7" width="1" height="10.8" fill="#ec8a48"/><rect x="187" y="221.0" width="3" height="4.0" fill="#ec8a48"/><rect x="188" y="222.0" width="1" height="2.0" fill="#f7a86c"/><rect x="192" y="201.0" width="1" height="22.3" fill="#ec8a48"/><rect x="191" y="209.4" width="3" height="10.1" fill="#ec8a48"/><rect x="192" y="210.4" width="1" height="8.1" fill="#f7a86c"/><rect x="196" y="200.0" width="1" height="20.0" fill="#ec8a48"/><rect x="195" y="210.0" width="3" height="4.0" fill="#ec8a48"/><rect x="196" y="211.0" width="1" height="2.0" fill="#f7a86c"/><rect x="201" y="208.0" width="1" height="6.8" fill="#ec8a48"/><rect x="200" y="210.0" width="3" height="3.3" fill="#ec8a48"/><rect x="201" y="211.0" width="1" height="1.3" fill="#f7a86c"/><rect x="205" y="198.0" width="1" height="10.7" fill="#ec8a48"/><rect x="204" y="204.0" width="3" height="4.0" fill="#ec8a48"/><rect x="205" y="205.0" width="1" height="2.0" fill="#f7a86c"/><rect x="210" y="201.0" width="1" height="7.0" fill="#ec8a48"/><rect x="209" y="202.5" width="3" height="1.5" fill="#ec8a48"/><rect x="214" y="197.0" width="1" height="12.4" fill="#ec8a48"/><rect x="213" y="201.0" width="3" height="2.3" fill="#ec8a48"/><rect x="218" y="184.8" width="1" height="16.9" fill="#ec8a48"/><rect x="217" y="190.0" width="3" height="9.4" fill="#ec8a48"/><rect x="218" y="191.0" width="1" height="7.4" fill="#f7a86c"/><rect x="223" y="168.5" width="1" height="26.3" fill="#ec8a48"/><rect x="222" y="174.0" width="3" height="15.4" fill="#ec8a48"/><rect x="223" y="175.0" width="1" height="13.4" fill="#f7a86c"/><rect x="228" y="167.8" width="1" height="9.2" fill="#ec8a48"/><rect x="227" y="170.0" width="3" height="3.2" fill="#ec8a48"/><rect x="228" y="171.0" width="1" height="1.2" fill="#f7a86c"/><rect x="232" y="166.0" width="1" height="8.0" fill="#ec8a48"/><rect x="231" y="170.4" width="3" height="2.8" fill="#ec8a48"/><rect x="236" y="162.4" width="1" height="16.2" fill="#ec8a48"/><rect x="235" y="173.2" width="3" height="1.6" fill="#ec8a48"/><rect x="241" y="169.4" width="1" height="19.2" fill="#ec8a48"/><rect x="240" y="174.8" width="3" height="13.1" fill="#ec8a48"/><rect x="241" y="175.8" width="1" height="11.1" fill="#6a4030"/><rect x="246" y="181.0" width="1" height="12.3" fill="#ec8a48"/><rect x="245" y="182.5" width="3" height="1.5" fill="#ec8a48"/><rect x="250" y="164.7" width="1" height="34.7" fill="#ec8a48"/><rect x="249" y="183.0" width="3" height="2.6" fill="#ec8a48"/><rect x="254" y="175.5" width="1" height="11.5" fill="#ec8a48"/><rect x="253" y="181.0" width="3" height="1.5" fill="#ec8a48"/><rect x="259" y="179.0" width="1" height="4.0" fill="#ec8a48"/><rect x="258" y="180.0" width="3" height="2.0" fill="#ec8a48"/><rect x="264" y="166.0" width="1" height="17.0" fill="#ec8a48"/><rect x="263" y="168.6" width="3" height="13.1" fill="#ec8a48"/><rect x="264" y="169.6" width="1" height="11.1" fill="#f7a86c"/><rect x="268" y="161.6" width="1" height="19.4" fill="#ec8a48"/><rect x="267" y="167.8" width="3" height="11.6" fill="#ec8a48"/><rect x="268" y="168.8" width="1" height="9.6" fill="#f7a86c"/><rect x="272" y="156.0" width="1" height="25.0" fill="#ec8a48"/><rect x="271" y="165.5" width="3" height="11.5" fill="#ec8a48"/><rect x="272" y="166.5" width="1" height="9.5" fill="#f7a86c"/><rect x="277" y="161.0" width="1" height="20.0" fill="#ec8a48"/><rect x="276" y="164.0" width="3" height="6.0" fill="#ec8a48"/><rect x="277" y="165.0" width="1" height="4.0" fill="#f7a86c"/><rect x="282" y="164.7" width="1" height="10.8" fill="#ec8a48"/><rect x="281" y="173.2" width="3" height="1.6" fill="#ec8a48"/><rect x="286" y="163.0" width="1" height="11.8" fill="#ec8a48"/><rect x="285" y="167.8" width="3" height="7.0" fill="#ec8a48"/><rect x="286" y="168.8" width="1" height="5.0" fill="#f7a86c"/><rect x="290" y="172.4" width="1" height="18.6" fill="#ec8a48"/><rect x="289" y="174.0" width="3" height="15.4" fill="#ec8a48"/><rect x="290" y="175.0" width="1" height="13.4" fill="#6a4030"/><rect x="295" y="170.0" width="1" height="24.0" fill="#ec8a48"/><rect x="294" y="184.0" width="3" height="2.3" fill="#ec8a48"/><rect x="300" y="174.0" width="1" height="17.7" fill="#ec8a48"/><rect x="299" y="184.0" width="3" height="3.0" fill="#ec8a48"/><rect x="300" y="185.0" width="1" height="1.0" fill="#6a4030"/><rect x="304" y="177.8" width="1" height="13.9" fill="#ec8a48"/><rect x="303" y="184.0" width="3" height="2.3" fill="#ec8a48"/><rect x="308" y="179.4" width="1" height="8.6" fill="#ec8a48"/><rect x="307" y="181.7" width="3" height="5.3" fill="#ec8a48"/><rect x="308" y="182.7" width="1" height="3.3" fill="#f7a86c"/><rect x="313" y="174.8" width="1" height="6.9" fill="#ec8a48"/><rect x="312" y="179.4" width="3" height="1.6" fill="#ec8a48"/><rect x="317" y="173.2" width="1" height="7.8" fill="#ec8a48"/><rect x="316" y="176.3" width="3" height="1.5" fill="#ec8a48"/><rect x="322" y="166.0" width="1" height="13.4" fill="#ec8a48"/><rect x="321" y="167.8" width="3" height="7.0" fill="#ec8a48"/><rect x="322" y="168.8" width="1" height="5.0" fill="#f7a86c"/><rect x="326" y="156.0" width="1" height="12.6" fill="#ec8a48"/><rect x="325" y="160.0" width="3" height="7.0" fill="#ec8a48"/><rect x="326" y="161.0" width="1" height="5.0" fill="#f7a86c"/><rect x="330" y="141.6" width="1" height="17.7" fill="#ec8a48"/><rect x="329" y="149.3" width="3" height="9.2" fill="#ec8a48"/><rect x="330" y="150.3" width="1" height="7.2" fill="#f7a86c"/><rect x="335" y="147.0" width="1" height="10.8" fill="#ec8a48"/><rect x="334" y="148.5" width="3" height="1.5" fill="#ec8a48"/><rect x="339" y="144.0" width="1" height="10.0" fill="#ec8a48"/><rect x="338" y="146.5" width="3" height="3.7" fill="#ec8a48"/><rect x="339" y="147.5" width="1" height="1.7" fill="#f7a86c"/><rect x="344" y="142.2" width="1" height="7.4" fill="#ec8a48"/><rect x="343" y="146.0" width="3" height="1.8" fill="#ec8a48"/><rect x="348" y="141.0" width="1" height="19.0" fill="#ec8a48"/><rect x="347" y="147.0" width="3" height="7.0" fill="#ec8a48"/><rect x="348" y="148.0" width="1" height="5.0" fill="#6a4030"/><rect x="352" y="136.0" width="1" height="19.8" fill="#ec8a48"/><rect x="351" y="146.0" width="3" height="6.0" fill="#ec8a48"/><rect x="352" y="147.0" width="1" height="4.0" fill="#f7a86c"/><rect x="357" y="139.0" width="1" height="16.8" fill="#ec8a48"/><rect x="356" y="146.0" width="3" height="5.5" fill="#ec8a48"/><rect x="357" y="147.0" width="1" height="3.5" fill="#f7a86c"/><rect x="362" y="146.0" width="1" height="30.8" fill="#ec8a48"/><rect x="361" y="151.0" width="3" height="23.3" fill="#ec8a48"/><rect x="362" y="152.0" width="1" height="21.3" fill="#6a4030"/><rect x="366" y="169.4" width="1" height="8.6" fill="#ec8a48"/><rect x="365" y="173.0" width="3" height="1.5" fill="#ec8a48"/><rect x="370" y="173.0" width="1" height="7.0" fill="#ec8a48"/><rect x="369" y="173.7" width="3" height="1.5" fill="#ec8a48"/><rect x="375" y="157.0" width="1" height="21.0" fill="#ec8a48"/><rect x="374" y="163.8" width="3" height="10.5" fill="#ec8a48"/><rect x="375" y="164.8" width="1" height="8.5" fill="#f7a86c"/><rect x="380" y="149.6" width="1" height="18.4" fill="#ec8a48"/><rect x="379" y="154.6" width="3" height="7.4" fill="#ec8a48"/><rect x="380" y="155.6" width="1" height="5.4" fill="#f7a86c"/><rect x="384" y="152.0" width="1" height="11.8" fill="#ec8a48"/><rect x="383" y="152.7" width="3" height="4.3" fill="#ec8a48"/><rect x="384" y="153.7" width="1" height="2.3" fill="#f7a86c"/><rect x="388" y="152.7" width="1" height="9.9" fill="#ec8a48"/><rect x="387" y="155.8" width="3" height="5.6" fill="#ec8a48"/><rect x="388" y="156.8" width="1" height="3.6" fill="#6a4030"/><rect x="393" y="153.3" width="1" height="8.7" fill="#ec8a48"/><rect x="392" y="159.5" width="3" height="1.5" fill="#ec8a48"/><rect x="398" y="155.0" width="1" height="7.6" fill="#ec8a48"/><rect x="397" y="157.0" width="3" height="1.5" fill="#ec8a48"/><rect x="402" y="149.6" width="1" height="14.2" fill="#ec8a48"/><rect x="401" y="158.3" width="3" height="3.7" fill="#ec8a48"/><rect x="402" y="159.3" width="1" height="1.7" fill="#6a4030"/><rect x="406" y="156.4" width="1" height="10.6" fill="#ec8a48"/><rect x="405" y="162.0" width="3" height="1.5" fill="#ec8a48"/><rect x="411" y="162.0" width="1" height="13.0" fill="#ec8a48"/><rect x="410" y="163.8" width="3" height="1.5" fill="#ec8a48"/><rect x="416" y="160.0" width="1" height="7.0" fill="#ec8a48"/><rect x="415" y="163.8" width="3" height="1.5" fill="#ec8a48"/><rect x="420" y="157.0" width="1" height="5.6" fill="#ec8a48"/><rect x="419" y="161.4" width="3" height="1.5" fill="#ec8a48"/><rect x="424" y="150.0" width="1" height="12.0" fill="#ec8a48"/><rect x="423" y="155.2" width="3" height="6.2" fill="#ec8a48"/><rect x="424" y="156.2" width="1" height="4.2" fill="#f7a86c"/><rect x="429" y="139.0" width="1" height="20.0" fill="#ec8a48"/><rect x="428" y="141.0" width="3" height="13.0" fill="#ec8a48"/><rect x="429" y="142.0" width="1" height="11.0" fill="#f7a86c"/><rect x="434" y="136.0" width="1" height="10.5" fill="#ec8a48"/><rect x="433" y="138.0" width="3" height="1.8" fill="#ec8a48"/><rect x="438" y="127.4" width="1" height="14.2" fill="#ec8a48"/><rect x="437" y="131.0" width="3" height="5.7" fill="#ec8a48"/><rect x="438" y="132.0" width="1" height="3.7" fill="#f7a86c"/><rect x="442" y="125.5" width="1" height="8.1" fill="#ec8a48"/><rect x="441" y="126.8" width="3" height="2.5" fill="#ec8a48"/><rect x="447" y="126.0" width="1" height="11.0" fill="#ec8a48"/><rect x="446" y="126.8" width="3" height="9.0" fill="#ec8a48"/><rect x="447" y="127.8" width="1" height="7.0" fill="#6a4030"/><rect x="452" y="130.0" width="1" height="8.0" fill="#ec8a48"/><rect x="451" y="132.4" width="3" height="2.0" fill="#ec8a48"/><rect x="456" y="127.5" width="1" height="11.8" fill="#ec8a48"/><rect x="455" y="131.7" width="3" height="4.8" fill="#ec8a48"/><rect x="456" y="132.7" width="1" height="2.8" fill="#6a4030"/><rect x="460" y="134.4" width="1" height="13.9" fill="#ec8a48"/><rect x="459" y="135.8" width="3" height="1.5" fill="#ec8a48"/><rect x="465" y="132.4" width="1" height="9.6" fill="#ec8a48"/><rect x="464" y="135.0" width="3" height="2.0" fill="#ec8a48"/><rect x="470" y="133.0" width="1" height="7.0" fill="#ec8a48"/><rect x="469" y="135.0" width="3" height="1.5" fill="#ec8a48"/><rect x="474" y="133.0" width="1" height="11.0" fill="#ec8a48"/><rect x="473" y="135.0" width="3" height="7.8" fill="#ec8a48"/><rect x="474" y="136.0" width="1" height="5.8" fill="#6a4030"/><rect x="478" y="138.0" width="1" height="9.6" fill="#ec8a48"/><rect x="477" y="141.4" width="3" height="2.1" fill="#ec8a48"/><rect x="483" y="139.3" width="1" height="14.7" fill="#ec8a48"/><rect x="482" y="142.0" width="3" height="2.9" fill="#ec8a48"/><rect x="487" y="140.7" width="1" height="9.7" fill="#ec8a48"/><rect x="486" y="144.0" width="3" height="1.5" fill="#ec8a48"/><rect x="491" y="144.9" width="1" height="31.1" fill="#ec8a48"/><rect x="490" y="146.2" width="3" height="28.5" fill="#ec8a48"/><rect x="491" y="147.2" width="1" height="26.5" fill="#6a4030"/><rect x="496" y="166.4" width="1" height="9.6" fill="#ec8a48"/><rect x="495" y="169.9" width="3" height="4.1" fill="#ec8a48"/><rect x="496" y="170.9" width="1" height="2.1" fill="#6a4030"/><rect x="500" y="163.6" width="1" height="9.7" fill="#ec8a48"/><rect x="499" y="168.5" width="3" height="1.5" fill="#ec8a48"/><rect x="505" y="167.0" width="1" height="7.7" fill="#ec8a48"/><rect x="504" y="168.5" width="3" height="2.1" fill="#ec8a48"/><rect x="509" y="164.3" width="1" height="13.2" fill="#ec8a48"/><rect x="508" y="169.9" width="3" height="2.7" fill="#ec8a48"/><rect x="514" y="157.4" width="1" height="24.3" fill="#ec8a48"/><rect x="513" y="162.2" width="3" height="9.8" fill="#ec8a48"/><rect x="514" y="163.2" width="1" height="7.8" fill="#f7a86c"/><rect x="518" y="155.0" width="1" height="14.0" fill="#ec8a48"/><rect x="517" y="161.5" width="3" height="4.9" fill="#ec8a48"/><rect x="518" y="162.5" width="1" height="2.9" fill="#f7a86c"/><rect x="522" y="163.0" width="1" height="7.6" fill="#ec8a48"/><rect x="521" y="167.0" width="3" height="2.0" fill="#ec8a48"/><rect x="527" y="163.0" width="1" height="9.6" fill="#ec8a48"/><rect x="526" y="165.0" width="3" height="1.5" fill="#ec8a48"/><rect x="532" y="163.6" width="1" height="7.0" fill="#ec8a48"/><rect x="531" y="166.4" width="3" height="1.5" fill="#ec8a48"/><rect x="536" y="164.3" width="1" height="26.4" fill="#ec8a48"/><rect x="535" y="165.0" width="3" height="25.0" fill="#ec8a48"/><rect x="536" y="166.0" width="1" height="23.0" fill="#6a4030"/><rect x="540" y="178.0" width="1" height="17.5" fill="#ec8a48"/><rect x="539" y="188.6" width="3" height="4.2" fill="#ec8a48"/><rect x="540" y="189.6" width="1" height="2.2" fill="#6a4030"/><rect x="545" y="187.0" width="1" height="10.6" fill="#ec8a48"/><rect x="544" y="190.7" width="3" height="2.1" fill="#ec8a48"/><rect x="550" y="185.0" width="1" height="10.5" fill="#ec8a48"/><rect x="549" y="190.0" width="3" height="1.5" fill="#ec8a48"/><rect x="554" y="182.5" width="1" height="9.5" fill="#ec8a48"/><rect x="553" y="186.0" width="3" height="2.5" fill="#ec8a48"/><rect x="558" y="182.5" width="1" height="9.5" fill="#ec8a48"/><rect x="557" y="184.0" width="3" height="7.0" fill="#ec8a48"/><rect x="558" y="185.0" width="1" height="5.0" fill="#6a4030"/><rect x="563" y="180.0" width="1" height="14.4" fill="#ec8a48"/><rect x="562" y="185.0" width="3" height="1.5" fill="#ec8a48"/><rect x="568" y="168.0" width="1" height="23.0" fill="#ec8a48"/><rect x="567" y="176.6" width="3" height="13.4" fill="#ec8a48"/><rect x="568" y="177.6" width="1" height="11.4" fill="#f7a86c"/><rect x="572" y="171.5" width="1" height="13.5" fill="#ec8a48"/><rect x="571" y="175.7" width="3" height="6.0" fill="#ec8a48"/><rect x="572" y="176.7" width="1" height="4.0" fill="#f7a86c"/><rect x="576" y="179.0" width="1" height="7.0" fill="#ec8a48"/><rect x="575" y="181.0" width="3" height="4.0" fill="#ec8a48"/><rect x="576" y="182.0" width="1" height="2.0" fill="#6a4030"/><rect x="581" y="178.0" width="1" height="7.0" fill="#ec8a48"/><rect x="580" y="181.0" width="3" height="1.5" fill="#ec8a48"/><rect x="586" y="179.0" width="1" height="11.0" fill="#ec8a48"/><rect x="585" y="180.0" width="3" height="9.3" fill="#ec8a48"/><rect x="586" y="181.0" width="1" height="7.3" fill="#6a4030"/><rect x="590" y="171.5" width="1" height="18.5" fill="#ec8a48"/><rect x="589" y="176.6" width="3" height="13.4" fill="#ec8a48"/><rect x="590" y="177.6" width="1" height="11.4" fill="#f7a86c"/><rect x="594" y="146.0" width="1" height="27.0" fill="#ec8a48"/><rect x="593" y="153.7" width="3" height="18.6" fill="#ec8a48"/><rect x="594" y="154.7" width="1" height="16.6" fill="#f7a86c"/><rect x="599" y="144.3" width="1" height="11.9" fill="#ec8a48"/><rect x="598" y="152.0" width="3" height="1.7" fill="#ec8a48"/><rect x="604" y="148.6" width="1" height="11.0" fill="#ec8a48"/><rect x="603" y="150.0" width="3" height="8.0" fill="#ec8a48"/><rect x="604" y="151.0" width="1" height="6.0" fill="#6a4030"/><rect x="608" y="152.8" width="1" height="6.8" fill="#ec8a48"/><rect x="607" y="154.5" width="3" height="2.5" fill="#ec8a48"/><rect x="612" y="152.0" width="1" height="8.5" fill="#ec8a48"/><rect x="611" y="155.0" width="3" height="1.5" fill="#ec8a48"/><rect x="617" y="144.3" width="1" height="17.7" fill="#ec8a48"/><rect x="616" y="152.0" width="3" height="1.7" fill="#ec8a48"/><rect x="622" y="131.6" width="1" height="19.4" fill="#ec8a48"/><rect x="621" y="139.0" width="3" height="11.3" fill="#ec8a48"/><rect x="622" y="140.0" width="1" height="9.3" fill="#f7a86c"/><rect x="626" y="120.6" width="1" height="17.8" fill="#ec8a48"/><rect x="625" y="130.0" width="3" height="7.5" fill="#ec8a48"/><rect x="626" y="131.0" width="1" height="5.5" fill="#f7a86c"/><rect x="630" y="122.3" width="1" height="9.3" fill="#ec8a48"/><rect x="629" y="128.0" width="3" height="2.7" fill="#ec8a48"/><rect x="635" y="121.4" width="1" height="10.2" fill="#ec8a48"/><rect x="634" y="125.7" width="3" height="5.0" fill="#ec8a48"/><rect x="635" y="126.7" width="1" height="3.0" fill="#f7a86c"/><rect x="639" y="116.3" width="1" height="10.2" fill="#ec8a48"/><rect x="638" y="119.0" width="3" height="5.0" fill="#ec8a48"/><rect x="639" y="120.0" width="1" height="3.0" fill="#f7a86c"/><rect x="644" y="105.3" width="1" height="15.3" fill="#ec8a48"/><rect x="643" y="112.0" width="3" height="1.5" fill="#ec8a48"/><rect x="648" y="108.7" width="1" height="12.7" fill="#ec8a48"/><rect x="647" y="111.2" width="3" height="5.1" fill="#ec8a48"/><rect x="648" y="112.2" width="1" height="3.1" fill="#6a4030"/><rect x="652" y="100.2" width="1" height="20.4" fill="#ec8a48"/><rect x="651" y="106.0" width="3" height="3.5" fill="#ec8a48"/><rect x="652" y="107.0" width="1" height="1.5" fill="#f7a86c"/><rect x="657" y="104.4" width="1" height="11.1" fill="#ec8a48"/><rect x="656" y="105.3" width="3" height="8.5" fill="#ec8a48"/><rect x="657" y="106.3" width="1" height="6.5" fill="#6a4030"/><rect x="661" y="107.3" width="1" height="14.7" fill="#ec8a48"/><rect x="660" y="111.6" width="3" height="8.6" fill="#ec8a48"/><rect x="661" y="112.6" width="1" height="6.6" fill="#6a4030"/><rect x="666" y="114.7" width="1" height="9.3" fill="#ec8a48"/><rect x="665" y="119.0" width="3" height="1.5" fill="#ec8a48"/><rect x="670" y="106.7" width="1" height="16.6" fill="#ec8a48"/><rect x="669" y="119.0" width="3" height="1.5" fill="#ec8a48"/><rect x="674" y="117.8" width="1" height="19.2" fill="#ec8a48"/><rect x="673" y="118.4" width="3" height="14.2" fill="#ec8a48"/><rect x="674" y="119.4" width="1" height="12.2" fill="#6a4030"/><rect x="679" y="122.0" width="1" height="12.4" fill="#ec8a48"/><rect x="678" y="128.3" width="3" height="3.1" fill="#ec8a48"/><rect x="679" y="129.3" width="1" height="1.1" fill="#6a4030"/><rect x="684" y="127.0" width="1" height="7.4" fill="#ec8a48"/><rect x="683" y="131.4" width="3" height="1.5" fill="#ec8a48"/><rect x="688" y="128.3" width="1" height="19.1" fill="#ec8a48"/><rect x="687" y="132.6" width="3" height="10.4" fill="#ec8a48"/><rect x="688" y="133.6" width="1" height="8.4" fill="#6a4030"/><rect x="692" y="137.5" width="1" height="7.5" fill="#ec8a48"/><rect x="691" y="140.0" width="3" height="1.5" fill="#ec8a48"/><rect x="697" y="117.0" width="1" height="30.4" fill="#ec8a48"/><rect x="696" y="124.0" width="3" height="16.6" fill="#ec8a48"/><rect x="697" y="125.0" width="1" height="14.6" fill="#f7a86c"/><rect x="702" y="111.0" width="1" height="14.8" fill="#ec8a48"/><rect x="701" y="117.0" width="3" height="6.3" fill="#ec8a48"/><rect x="702" y="118.0" width="1" height="4.3" fill="#f7a86c"/><rect x="706" y="114.0" width="1" height="15.5" fill="#ec8a48"/><rect x="705" y="116.0" width="3" height="5.0" fill="#ec8a48"/><rect x="706" y="117.0" width="1" height="3.0" fill="#f7a86c"/><rect x="710" y="108.0" width="1" height="13.5" fill="#ec8a48"/><rect x="709" y="109.8" width="3" height="9.8" fill="#ec8a48"/><rect x="710" y="110.8" width="1" height="7.8" fill="#f7a86c"/><rect x="715" y="111.6" width="1" height="9.4" fill="#ec8a48"/><rect x="714" y="112.2" width="3" height="8.0" fill="#ec8a48"/><rect x="715" y="113.2" width="1" height="6.0" fill="#6a4030"/><rect x="720" y="116.0" width="1" height="11.0" fill="#ec8a48"/><rect x="719" y="119.6" width="3" height="6.8" fill="#ec8a48"/><rect x="720" y="120.6" width="1" height="4.8" fill="#6a4030"/><rect x="724" y="116.5" width="1" height="19.2" fill="#ec8a48"/><rect x="723" y="127.0" width="3" height="5.6" fill="#ec8a48"/><rect x="724" y="128.0" width="1" height="3.6" fill="#6a4030"/><rect x="728" y="127.0" width="1" height="14.2" fill="#ec8a48"/><rect x="727" y="132.6" width="3" height="3.7" fill="#ec8a48"/><rect x="728" y="133.6" width="1" height="1.7" fill="#6a4030"/><rect x="733" y="128.9" width="1" height="9.1" fill="#ec8a48"/><rect x="732" y="131.4" width="3" height="3.0" fill="#ec8a48"/><rect x="733" y="132.4" width="1" height="1.0" fill="#f7a86c"/><rect x="738" y="127.0" width="1" height="12.4" fill="#ec8a48"/><rect x="737" y="130.7" width="3" height="6.8" fill="#ec8a48"/><rect x="738" y="131.7" width="1" height="4.8" fill="#6a4030"/><rect x="742" y="132.0" width="1" height="8.0" fill="#ec8a48"/><rect x="741" y="133.8" width="3" height="1.9" fill="#ec8a48"/><rect x="746" y="128.3" width="1" height="6.7" fill="#ec8a48"/><rect x="745" y="130.7" width="3" height="1.5" fill="#ec8a48"/><rect x="751" y="122.7" width="1" height="21.6" fill="#ec8a48"/><rect x="750" y="130.0" width="3" height="8.8" fill="#ec8a48"/><rect x="751" y="131.0" width="1" height="6.8" fill="#6a4030"/><rect x="756" y="124.0" width="1" height="16.6" fill="#ec8a48"/><rect x="755" y="129.5" width="3" height="6.8" fill="#ec8a48"/><rect x="756" y="130.5" width="1" height="4.8" fill="#f7a86c"/><rect x="760" y="120.9" width="1" height="11.1" fill="#ec8a48"/><rect x="759" y="129.5" width="3" height="1.5" fill="#ec8a48"/><rect x="764" y="125.0" width="1" height="20.6" fill="#ec8a48"/><rect x="763" y="127.0" width="3" height="18.0" fill="#ec8a48"/><rect x="764" y="128.0" width="1" height="16.0" fill="#6a4030"/><rect x="769" y="142.2" width="1" height="15.8" fill="#ec8a48"/><rect x="768" y="144.0" width="3" height="8.8" fill="#ec8a48"/><rect x="769" y="145.0" width="1" height="6.8" fill="#6a4030"/><rect x="774" y="147.5" width="1" height="8.0" fill="#ec8a48"/><rect x="773" y="152.0" width="3" height="1.7" fill="#ec8a48"/><rect x="778" y="147.5" width="1" height="19.5" fill="#ec8a48"/><rect x="777" y="152.0" width="3" height="8.8" fill="#ec8a48"/><rect x="778" y="153.0" width="1" height="6.8" fill="#6a4030"/><rect x="782" y="158.0" width="1" height="25.0" fill="#ec8a48"/><rect x="781" y="160.0" width="3" height="18.6" fill="#ec8a48"/><rect x="782" y="161.0" width="1" height="16.6" fill="#6a4030"/><rect x="787" y="160.8" width="1" height="20.4" fill="#ec8a48"/><rect x="786" y="167.0" width="3" height="10.7" fill="#ec8a48"/><rect x="787" y="168.0" width="1" height="8.7" fill="#6a4030"/><rect x="792" y="161.7" width="1" height="9.8" fill="#ec8a48"/><rect x="791" y="166.0" width="3" height="3.7" fill="#ec8a48"/><rect x="792" y="167.0" width="1" height="1.7" fill="#f7a86c"/><rect x="796" y="161.7" width="1" height="8.9" fill="#ec8a48"/><rect x="795" y="167.0" width="3" height="1.8" fill="#ec8a48"/><rect x="800" y="161.7" width="1" height="8.9" fill="#ec8a48"/><rect x="799" y="166.0" width="3" height="2.0" fill="#ec8a48"/><rect x="805" y="161.7" width="1" height="17.7" fill="#ec8a48"/><rect x="804" y="166.0" width="3" height="11.7" fill="#ec8a48"/><rect x="805" y="167.0" width="1" height="9.7" fill="#6a4030"/><rect x="809" y="171.5" width="1" height="23.0" fill="#ec8a48"/><rect x="808" y="176.8" width="3" height="12.4" fill="#ec8a48"/><rect x="809" y="177.8" width="1" height="10.4" fill="#6a4030"/><rect x="813" y="182.0" width="1" height="32.0" fill="#ec8a48"/><rect x="812" y="189.2" width="3" height="23.1" fill="#ec8a48"/><rect x="813" y="190.2" width="1" height="21.1" fill="#6a4030"/><rect x="818" y="201.6" width="1" height="15.1" fill="#ec8a48"/><rect x="817" y="205.0" width="3" height="5.5" fill="#ec8a48"/><rect x="818" y="206.0" width="1" height="3.5" fill="#6a4030"/><rect x="822" y="200.0" width="1" height="7.8" fill="#ec8a48"/><rect x="821" y="203.4" width="3" height="1.8" fill="#ec8a48"/><rect x="826" y="192.8" width="1" height="12.2" fill="#ec8a48"/><rect x="825" y="200.7" width="3" height="2.7" fill="#ec8a48"/><rect x="831" y="198.0" width="1" height="13.4" fill="#ec8a48"/><rect x="830" y="200.0" width="3" height="7.8" fill="#ec8a48"/><rect x="831" y="201.0" width="1" height="5.8" fill="#6a4030"/><rect x="836" y="188.3" width="1" height="21.3" fill="#ec8a48"/><rect x="835" y="192.8" width="3" height="13.2" fill="#ec8a48"/><rect x="836" y="193.8" width="1" height="11.2" fill="#f7a86c"/><rect x="840" y="189.2" width="1" height="31.8" fill="#ec8a48"/><rect x="839" y="192.0" width="3" height="28.3" fill="#ec8a48"/><rect x="840" y="193.0" width="1" height="26.3" fill="#6a4030"/><rect x="844" y="213.8" width="1" height="7.9" fill="#ec8a48"/><rect x="843" y="215.5" width="3" height="6.2" fill="#ec8a48"/><rect x="844" y="216.5" width="1" height="4.2" fill="#6a4030"/><rect x="849" y="216.5" width="1" height="6.3" fill="#ec8a48"/><rect x="848" y="218.0" width="3" height="3.4" fill="#ec8a48"/><rect x="849" y="219.0" width="1" height="1.4" fill="#6a4030"/><rect x="854" y="215.8" width="1" height="11.5" fill="#ec8a48"/><rect x="853" y="219.0" width="3" height="8.0" fill="#ec8a48"/><rect x="854" y="220.0" width="1" height="6.0" fill="#6a4030"/><rect x="858" y="218.0" width="1" height="11.7" fill="#ec8a48"/><rect x="857" y="224.9" width="3" height="1.5" fill="#ec8a48"/><rect x="862" y="212.0" width="1" height="13.6" fill="#ec8a48"/><rect x="861" y="217.2" width="3" height="6.6" fill="#ec8a48"/><rect x="862" y="218.2" width="1" height="4.6" fill="#f7a86c"/><rect x="867" y="213.8" width="1" height="15.2" fill="#ec8a48"/><rect x="866" y="217.2" width="3" height="9.8" fill="#ec8a48"/><rect x="867" y="218.2" width="1" height="7.8" fill="#6a4030"/><rect x="872" y="220.0" width="1" height="9.7" fill="#ec8a48"/><rect x="871" y="222.4" width="3" height="2.5" fill="#ec8a48"/><rect x="876" y="218.0" width="1" height="7.6" fill="#ec8a48"/><rect x="875" y="220.7" width="3" height="1.5" fill="#ec8a48"/><rect x="880" y="212.7" width="1" height="9.0" fill="#ec8a48"/><rect x="879" y="217.2" width="3" height="2.8" fill="#ec8a48"/><line x1="15" y1="217.5" x2="890" y2="217.5" stroke="#c8ccd2" stroke-width="1"/><rect x="15" y="230.2" width="875" height="1.7" fill="#22c51f"/><rect x="15" y="174.2" width="875" height="1.7" fill="#c4282a"/><path d="M14.0 122.7 L30.8 123.5 L49.3 120.7 L64.0 126.0 L84.5 131.5 L99.3 139.0 L124.0 150.0 L152.3 163.0 L179.3 174.7 L200.0 181.0 L218.7 184.0 L231.0 183.0 L265.5 181.7 L285.6 182.5 L338.0 176.5 L355.5 173.0 L382.7 170.6 L411.0 170.0 L423.4 167.5 L444.4 163.8 L464.4 159.2 L477.0 156.4 L497.8 156.7 L503.3 159.2 L528.3 160.0 L539.4 162.2 L553.0 165.0 L569.0 167.2 L588.5 169.0 L608.0 167.2 L623.3 164.7 L640.3 160.5 L660.0 152.8 L673.8 149.3 L694.8 148.0 L710.9 143.0 L726.9 140.6 L757.8 139.4 L767.0 139.5 L783.7 143.0 L808.6 147.5 L822.8 153.7 L851.2 165.3 L874.0 175.0 L880.0 178.0" fill="none" stroke="#b83032" stroke-width="1.2" stroke-linejoin="round"/><path d="M14.0 127.5 L30.8 124.0 L47.5 121.3 L52.0 120.0 L60.4 127.8 L71.5 133.3 L84.5 141.7 L97.5 152.8 L112.3 164.0 L124.0 174.5 L138.4 187.0 L153.9 192.5 L169.3 199.4 L187.8 209.4 L209.4 209.4 L218.7 206.4 L231.0 198.5 L245.4 193.3 L260.9 191.0 L282.5 182.5 L307.2 183.2 L318.0 183.2 L338.0 173.2 L356.8 165.0 L374.0 167.0 L391.3 164.4 L401.2 162.6 L421.0 162.6 L428.4 160.0 L445.0 152.6 L460.3 148.3 L474.2 144.9 L486.7 144.9 L500.6 151.8 L517.2 156.7 L532.5 159.4 L539.4 165.0 L553.0 170.5 L562.2 173.2 L586.0 177.4 L594.4 174.9 L616.5 167.2 L633.5 158.0 L647.0 147.7 L660.0 138.6 L671.3 134.4 L683.7 132.6 L694.8 135.0 L710.9 129.5 L720.7 127.7 L733.0 129.0 L745.4 130.0 L760.0 130.0 L767.0 132.5 L783.7 137.7 L801.5 148.4 L814.0 160.0 L837.0 176.8 L854.7 192.8 L862.0 196.0 L874.0 201.6 L879.6 204.4" fill="none" stroke="#1a1caa" stroke-width="1.2" stroke-linejoin="round"/><path d="M28.0 282.5 V281.0 M33.0 282.5 V280.3 M37.0 282.5 V280.1 M42.0 282.5 V280.1 M46.0 282.5 V279.7 M51.0 282.5 V280.5 M60.0 282.5 V287.9 M64.0 282.5 V291.0 M69.0 282.5 V291.0 M73.0 282.5 V290.9 M78.0 282.5 V290.4 M82.0 282.5 V290.0 M86.0 282.5 V290.1 M91.0 282.5 V291.7 M95.0 282.5 V292.5 M100.0 282.5 V292.8 M104.0 282.5 V292.9 M109.0 282.5 V291.9 M113.0 282.5 V291.3 M118.0 282.5 V290.6 M122.0 282.5 V289.7 M127.0 282.5 V288.5 M131.0 282.5 V287.9 M136.0 282.5 V287.9 M140.0 282.5 V287.0 M145.0 282.5 V284.6 M153.0 282.5 V281.2 M158.0 282.5 V280.9 M162.0 282.5 V281.4 M167.0 282.5 V281.6 M171.0 282.5 V281.4 M176.0 282.5 V281.2 M180.0 282.5 V281.1 M185.0 282.5 V281.1 M189.0 282.5 V281.1 M194.0 282.5 V279.0 M198.0 282.5 V277.4 M203.0 282.5 V275.8 M207.0 282.5 V275.0 M212.0 282.5 V274.6 M216.0 282.5 V275.0 M221.0 282.5 V274.4 M225.0 282.5 V272.1 M229.0 282.5 V270.5 M234.0 282.5 V270.5 M238.0 282.5 V271.2 M243.0 282.5 V274.8 M247.0 282.5 V275.8 M252.0 282.5 V277.1 M256.0 282.5 V278.0 M261.0 282.5 V278.0 M265.0 282.5 V278.0 M270.0 282.5 V278.0 M274.0 282.5 V278.5 M279.0 282.5 V279.5 M283.0 282.5 V280.2 M292.0 282.5 V284.5 M297.0 282.5 V285.6 M301.0 282.5 V286.5 M305.0 282.5 V286.6 M310.0 282.5 V286.1 M314.0 282.5 V285.7 M319.0 282.5 V283.7 M328.0 282.5 V281.4 M332.0 282.5 V280.5 M337.0 282.5 V279.4 M341.0 282.5 V278.6 M346.0 282.5 V278.8 M350.0 282.5 V279.0 M355.0 282.5 V279.4 M359.0 282.5 V280.0 M364.0 282.5 V283.7 M368.0 282.5 V286.5 M373.0 282.5 V287.7 M377.0 282.5 V288.1 M381.0 282.5 V286.8 M386.0 282.5 V285.3 M390.0 282.5 V284.9 M395.0 282.5 V284.8 M399.0 282.5 V284.7 M404.0 282.5 V284.8 M408.0 282.5 V285.5 M413.0 282.5 V286.2 M417.0 282.5 V286.0 M422.0 282.5 V285.6 M426.0 282.5 V284.2 M435.0 282.5 V281.0 M440.0 282.5 V279.2 M444.0 282.5 V278.6 M449.0 282.5 V278.7 M453.0 282.5 V279.5 M457.0 282.5 V280.3 M462.0 282.5 V281.4 M471.0 282.5 V283.8 M475.0 282.5 V284.6 M480.0 282.5 V285.1 M484.0 282.5 V285.1 M489.0 282.5 V287.5 M493.0 282.5 V288.9 M498.0 282.5 V290.4 M502.0 282.5 V291.0 M507.0 282.5 V291.5 M511.0 282.5 V291.2 M516.0 282.5 V290.0 M520.0 282.5 V289.1 M525.0 282.5 V288.2 M529.0 282.5 V287.4 M533.0 282.5 V286.6 M538.0 282.5 V287.8 M542.0 282.5 V288.8 M547.0 282.5 V289.8 M551.0 282.5 V288.9 M556.0 282.5 V288.0 M560.0 282.5 V287.4 M565.0 282.5 V286.4 M569.0 282.5 V284.9 M592.0 282.5 V280.1 M596.0 282.5 V278.3 M601.0 282.5 V276.1 M605.0 282.5 V275.8 M609.0 282.5 V275.6 M614.0 282.5 V275.3 M618.0 282.5 V275.1 M623.0 282.5 V274.9 M627.0 282.5 V274.7 M632.0 282.5 V274.7 M636.0 282.5 V274.6 M641.0 282.5 V274.6 M645.0 282.5 V274.4 M650.0 282.5 V274.2 M654.0 282.5 V274.8 M659.0 282.5 V276.3 M663.0 282.5 V278.2 M668.0 282.5 V280.4 M676.0 282.5 V284.4 M681.0 282.5 V286.7 M685.0 282.5 V287.5 M690.0 282.5 V288.5 M694.0 282.5 V288.7 M699.0 282.5 V287.7 M703.0 282.5 V286.5 M708.0 282.5 V285.4 M712.0 282.5 V284.8 M717.0 282.5 V284.5 M721.0 282.5 V285.0 M726.0 282.5 V286.2 M730.0 282.5 V287.2 M735.0 282.5 V287.3 M739.0 282.5 V286.9 M744.0 282.5 V286.5 M748.0 282.5 V287.0 M752.0 282.5 V287.5 M757.0 282.5 V286.5 M761.0 282.5 V287.1 M766.0 282.5 V288.1 M770.0 282.5 V288.5 M775.0 282.5 V289.3 M779.0 282.5 V290.5 M784.0 282.5 V291.7 M788.0 282.5 V291.7 M793.0 282.5 V291.5 M797.0 282.5 V290.4 M802.0 282.5 V289.1 M806.0 282.5 V289.9 M811.0 282.5 V290.3 M815.0 282.5 V290.9 M820.0 282.5 V291.9 M824.0 282.5 V292.3 M828.0 282.5 V291.2 M833.0 282.5 V289.4 M837.0 282.5 V287.1 M842.0 282.5 V287.9 M846.0 282.5 V288.3 M851.0 282.5 V288.4 M855.0 282.5 V287.8 M860.0 282.5 V286.7 M864.0 282.5 V285.7 M869.0 282.5 V284.3" stroke="#b02c30" stroke-width="1.7"/><path d="M14.0 288.9 L27.0 284.3 L36.1 281.7 L48.5 279.1 L54.4 281.7 L62.2 292.8 L71.3 296.7 L84.3 301.2 L92.1 307.1 L103.8 314.2 L120.8 316.8 L137.7 318.8 L144.2 316.2 L154.6 311.6 L164.0 311.5 L187.4 309.7 L203.0 299.3 L218.7 290.8 L229.1 278.4 L235.6 275.2 L242.1 276.5 L255.1 275.2 L270.8 271.3 L283.8 270.6 L291.6 274.5 L302.0 278.4 L314.0 278.4 L327.0 274.5 L340.0 268.0 L353.0 266.1 L358.3 266.1 L368.7 274.5 L376.5 276.5 L386.9 274.5 L402.5 275.8 L411.7 278.4 L420.8 279.1 L428.6 277.1 L440.3 270.0 L446.8 268.0 L461.1 268.0 L464.0 269.3 L483.5 273.2 L497.9 283.0 L509.6 289.5 L518.7 289.5 L533.0 290.2 L546.0 298.0 L563.0 299.3 L574.7 296.0 L587.7 294.0 L600.7 284.3 L614.0 277.8 L627.0 271.3 L640.0 264.1 L651.8 257.6 L659.6 257.6 L668.7 259.6 L679.1 264.8 L692.1 271.9 L698.6 271.9 L711.7 270.6 L718.2 270.6 L731.2 277.1 L744.2 279.1 L750.7 281.0 L757.2 280.4 L772.6 286.9 L784.3 294.7 L792.1 298.0 L801.2 298.6 L811.6 304.5 L822.0 311.6 L831.1 312.9 L836.4 311.0 L844.2 314.2 L852.0 316.2 L859.8 316.2 L870.2 314.9 L875.4 313.0" fill="none" stroke="#171878" stroke-width="1.25" stroke-linejoin="round"/><g fill="#e82226"><circle cx="18.4" cy="287.3" r="1.45"/><circle cx="22.9" cy="286.3" r="1.45"/><circle cx="27.3" cy="285.7" r="1.45"/><circle cx="31.8" cy="285.1" r="1.45"/><circle cx="36.3" cy="284.1" r="1.45"/><circle cx="40.8" cy="283.1" r="1.45"/><circle cx="45.2" cy="282.6" r="1.45"/><circle cx="49.7" cy="282.1" r="1.45"/><circle cx="54.2" cy="282.0" r="1.45"/><circle cx="58.6" cy="283.3" r="1.45"/><circle cx="63.1" cy="284.7" r="1.45"/><circle cx="67.6" cy="286.6" r="1.45"/><circle cx="72.0" cy="288.5" r="1.45"/><circle cx="76.5" cy="290.5" r="1.45"/><circle cx="81.0" cy="292.5" r="1.45"/><circle cx="85.4" cy="294.5" r="1.45"/><circle cx="89.9" cy="296.5" r="1.45"/><circle cx="94.4" cy="298.5" r="1.45"/><circle cx="98.9" cy="301.0" r="1.45"/><circle cx="103.3" cy="303.5" r="1.45"/><circle cx="107.8" cy="305.3" r="1.45"/><circle cx="112.3" cy="306.6" r="1.45"/><circle cx="116.7" cy="308.0" r="1.45"/><circle cx="121.2" cy="309.5" r="1.45"/><circle cx="125.7" cy="311.2" r="1.45"/><circle cx="130.2" cy="312.5" r="1.45"/><circle cx="134.6" cy="313.1" r="1.45"/><circle cx="139.1" cy="313.6" r="1.45"/><circle cx="143.6" cy="313.9" r="1.45"/><circle cx="148.0" cy="314.1" r="1.45"/><circle cx="152.5" cy="313.8" r="1.45"/><circle cx="157.0" cy="313.2" r="1.45"/><circle cx="161.4" cy="312.6" r="1.45"/><circle cx="165.9" cy="312.2" r="1.45"/><circle cx="170.4" cy="312.1" r="1.45"/><circle cx="174.8" cy="311.9" r="1.45"/><circle cx="179.3" cy="311.8" r="1.45"/><circle cx="183.8" cy="311.5" r="1.45"/><circle cx="188.3" cy="310.4" r="1.45"/><circle cx="192.7" cy="309.3" r="1.45"/><circle cx="197.2" cy="308.2" r="1.45"/><circle cx="201.7" cy="306.6" r="1.45"/><circle cx="206.1" cy="305.0" r="1.45"/><circle cx="210.6" cy="303.1" r="1.45"/><circle cx="215.1" cy="300.3" r="1.45"/><circle cx="219.5" cy="297.4" r="1.45"/><circle cx="224.0" cy="294.6" r="1.45"/><circle cx="228.5" cy="292.1" r="1.45"/><circle cx="233.0" cy="289.5" r="1.45"/><circle cx="237.4" cy="287.0" r="1.45"/><circle cx="241.9" cy="284.4" r="1.45"/><circle cx="246.4" cy="282.8" r="1.45"/><circle cx="250.8" cy="281.2" r="1.45"/><circle cx="255.3" cy="279.6" r="1.45"/><circle cx="259.8" cy="278.6" r="1.45"/><circle cx="264.2" cy="277.5" r="1.45"/><circle cx="268.7" cy="276.4" r="1.45"/><circle cx="273.2" cy="275.2" r="1.45"/><circle cx="277.7" cy="274.1" r="1.45"/><circle cx="282.1" cy="273.0" r="1.45"/><circle cx="286.6" cy="272.1" r="1.45"/><circle cx="291.1" cy="272.4" r="1.45"/><circle cx="295.5" cy="273.1" r="1.45"/><circle cx="300.0" cy="273.8" r="1.45"/><circle cx="304.5" cy="274.3" r="1.45"/><circle cx="308.9" cy="274.7" r="1.45"/><circle cx="313.4" cy="275.1" r="1.45"/><circle cx="317.9" cy="275.8" r="1.45"/><circle cx="322.4" cy="276.4" r="1.45"/><circle cx="326.8" cy="275.5" r="1.45"/><circle cx="331.3" cy="274.3" r="1.45"/><circle cx="335.8" cy="273.1" r="1.45"/><circle cx="340.2" cy="271.9" r="1.45"/><circle cx="344.7" cy="271.0" r="1.45"/><circle cx="349.2" cy="270.2" r="1.45"/><circle cx="353.6" cy="269.3" r="1.45"/><circle cx="358.1" cy="268.8" r="1.45"/><circle cx="362.6" cy="269.1" r="1.45"/><circle cx="367.1" cy="269.4" r="1.45"/><circle cx="371.5" cy="270.1" r="1.45"/><circle cx="376.0" cy="270.8" r="1.45"/><circle cx="380.5" cy="271.4" r="1.45"/><circle cx="384.9" cy="271.9" r="1.45"/><circle cx="389.4" cy="272.3" r="1.45"/><circle cx="393.9" cy="272.8" r="1.45"/><circle cx="398.3" cy="273.2" r="1.45"/><circle cx="402.8" cy="273.7" r="1.45"/><circle cx="407.3" cy="274.2" r="1.45"/><circle cx="411.8" cy="274.7" r="1.45"/><circle cx="416.2" cy="275.2" r="1.45"/><circle cx="420.7" cy="275.8" r="1.45"/><circle cx="425.2" cy="276.2" r="1.45"/><circle cx="429.6" cy="276.2" r="1.45"/><circle cx="434.1" cy="275.1" r="1.45"/><circle cx="438.6" cy="274.0" r="1.45"/><circle cx="443.0" cy="273.0" r="1.45"/><circle cx="447.5" cy="272.0" r="1.45"/><circle cx="452.0" cy="271.1" r="1.45"/><circle cx="456.5" cy="270.2" r="1.45"/><circle cx="460.9" cy="269.3" r="1.45"/><circle cx="465.4" cy="269.3" r="1.45"/><circle cx="469.9" cy="269.3" r="1.45"/><circle cx="474.3" cy="269.3" r="1.45"/><circle cx="478.8" cy="269.7" r="1.45"/><circle cx="483.3" cy="270.6" r="1.45"/><circle cx="487.7" cy="271.4" r="1.45"/><circle cx="492.2" cy="272.8" r="1.45"/><circle cx="496.7" cy="274.6" r="1.45"/><circle cx="501.2" cy="276.3" r="1.45"/><circle cx="505.6" cy="278.4" r="1.45"/><circle cx="510.1" cy="280.6" r="1.45"/><circle cx="514.6" cy="281.8" r="1.45"/><circle cx="519.0" cy="282.8" r="1.45"/><circle cx="523.5" cy="283.8" r="1.45"/><circle cx="528.0" cy="285.0" r="1.45"/><circle cx="532.4" cy="286.1" r="1.45"/><circle cx="536.9" cy="287.4" r="1.45"/><circle cx="541.4" cy="288.9" r="1.45"/><circle cx="545.9" cy="290.5" r="1.45"/><circle cx="550.3" cy="291.9" r="1.45"/><circle cx="554.8" cy="293.0" r="1.45"/><circle cx="559.3" cy="294.1" r="1.45"/><circle cx="563.7" cy="294.9" r="1.45"/><circle cx="568.2" cy="295.4" r="1.45"/><circle cx="572.7" cy="295.8" r="1.45"/><circle cx="577.1" cy="295.8" r="1.45"/><circle cx="581.6" cy="295.3" r="1.45"/><circle cx="586.1" cy="294.9" r="1.45"/><circle cx="590.6" cy="293.8" r="1.45"/><circle cx="595.0" cy="292.5" r="1.45"/><circle cx="599.5" cy="291.2" r="1.45"/><circle cx="604.0" cy="289.4" r="1.45"/><circle cx="608.4" cy="287.4" r="1.45"/><circle cx="612.9" cy="285.5" r="1.45"/><circle cx="617.4" cy="283.5" r="1.45"/><circle cx="621.8" cy="281.4" r="1.45"/><circle cx="626.3" cy="279.4" r="1.45"/><circle cx="630.8" cy="277.0" r="1.45"/><circle cx="635.3" cy="274.6" r="1.45"/><circle cx="639.7" cy="272.1" r="1.45"/><circle cx="644.2" cy="269.9" r="1.45"/><circle cx="648.7" cy="267.6" r="1.45"/><circle cx="653.1" cy="265.4" r="1.45"/><circle cx="657.6" cy="264.0" r="1.45"/><circle cx="662.1" cy="262.7" r="1.45"/><circle cx="666.5" cy="261.5" r="1.45"/><circle cx="671.0" cy="261.3" r="1.45"/><circle cx="675.5" cy="261.1" r="1.45"/><circle cx="680.0" cy="261.2" r="1.45"/><circle cx="684.4" cy="262.7" r="1.45"/><circle cx="688.9" cy="264.3" r="1.45"/><circle cx="693.4" cy="265.7" r="1.45"/><circle cx="697.8" cy="266.5" r="1.45"/><circle cx="702.3" cy="267.4" r="1.45"/><circle cx="706.8" cy="268.1" r="1.45"/><circle cx="711.2" cy="268.3" r="1.45"/><circle cx="715.7" cy="268.6" r="1.45"/><circle cx="720.2" cy="269.2" r="1.45"/><circle cx="724.7" cy="270.3" r="1.45"/><circle cx="729.1" cy="271.5" r="1.45"/><circle cx="733.6" cy="272.6" r="1.45"/><circle cx="738.1" cy="273.7" r="1.45"/><circle cx="742.5" cy="274.8" r="1.45"/><circle cx="747.0" cy="275.5" r="1.45"/><circle cx="751.5" cy="275.9" r="1.45"/><circle cx="755.9" cy="276.4" r="1.45"/><circle cx="760.4" cy="277.2" r="1.45"/><circle cx="764.9" cy="278.2" r="1.45"/><circle cx="769.4" cy="279.6" r="1.45"/><circle cx="773.8" cy="281.1" r="1.45"/><circle cx="778.3" cy="282.7" r="1.45"/><circle cx="782.8" cy="284.7" r="1.45"/><circle cx="787.2" cy="286.7" r="1.45"/><circle cx="791.7" cy="288.7" r="1.45"/><circle cx="796.2" cy="290.3" r="1.45"/><circle cx="800.6" cy="291.9" r="1.45"/><circle cx="805.1" cy="293.4" r="1.45"/><circle cx="809.6" cy="295.6" r="1.45"/><circle cx="814.1" cy="297.9" r="1.45"/><circle cx="818.5" cy="300.1" r="1.45"/><circle cx="823.0" cy="301.9" r="1.45"/><circle cx="827.5" cy="303.6" r="1.45"/><circle cx="831.9" cy="305.3" r="1.45"/><circle cx="836.4" cy="306.4" r="1.45"/><circle cx="840.9" cy="307.6" r="1.45"/><circle cx="845.3" cy="308.7" r="1.45"/><circle cx="849.8" cy="309.8" r="1.45"/><circle cx="854.3" cy="310.9" r="1.45"/><circle cx="858.8" cy="311.8" r="1.45"/><circle cx="863.2" cy="312.5" r="1.45"/><circle cx="867.7" cy="313.2" r="1.45"/><circle cx="872.2" cy="313.4" r="1.45"/><circle cx="876.6" cy="312.9" r="1.45"/><circle cx="881.1" cy="312.4" r="1.45"/></g><rect x="15" y="334" width="865" height="2" fill="#14149c"/><rect x="15" y="388" width="865" height="2" fill="#14149c"/><path d="M15.0 356.2 L21.8 357.0 M21.8 357.0 L27.0 354.3 M27.0 354.3 L31.6 360.2 M31.6 360.2 L35.5 354.3 M35.5 354.3 L40.7 362.8 M40.7 362.8 L45.2 355.6 M45.2 355.6 L49.2 354.3 M49.2 354.3 L53.1 370.6 M53.1 370.6 L55.7 375.8 M55.7 375.8 L62.0 381.0 M62.0 381.0 L68.0 377.0 M68.0 377.0 L75.2 375.1 M75.2 375.1 L80.4 381.0 M80.4 381.0 L85.0 377.7 M85.0 377.7 L89.5 387.5 M89.5 387.5 L94.1 384.9 M103.8 389.5 L107.8 381.0 M107.8 381.0 L114.3 383.6 M114.3 383.6 L120.1 388.8 M120.1 388.8 L125.3 384.2 M125.3 384.2 L129.9 388.8 M129.9 388.8 L135.1 386.2 M135.1 386.2 L139.0 388.8 M139.0 388.8 L144.2 379.7 M144.2 379.7 L148.1 377.1 M148.1 377.1 L155.9 378.4 M155.9 378.4 L164.0 383.0 M164.0 383.0 L170.5 388.2 M170.5 388.2 L174.4 382.3 M174.4 382.3 L179.6 386.2 M179.6 386.2 L184.8 379.7 M184.8 379.7 L192.0 367.3 M192.0 367.3 L196.6 370.6 M196.6 370.6 L205.7 362.8 M205.7 362.8 L214.8 360.2 M214.8 360.2 L223.2 344.5 M223.2 344.5 L227.8 341.3 M227.8 341.3 L233.0 344.5 M233.0 344.5 L237.6 345.8 M237.6 345.8 L242.1 356.9 M242.1 356.9 L248.6 354.3 M248.6 354.3 L253.8 352.3 M253.8 352.3 L259.0 353.6 M259.0 353.6 L263.6 344.5 M263.6 344.5 L268.8 354.3 M268.8 354.3 L272.7 345.8 M272.7 345.8 L278.6 350.4 M278.6 350.4 L281.2 349.1 M281.2 349.1 L286.4 353.6 M286.4 353.6 L290.3 364.7 M290.3 364.7 L295.5 362.8 M295.5 362.8 L299.4 365.4 M299.4 365.4 L304.6 362.1 M304.6 362.1 L308.5 364.7 M308.5 364.7 L314.0 357.6 M314.0 357.6 L319.2 354.3 M319.2 354.3 L324.4 349.1 M324.4 349.1 L331.6 339.3 M331.6 339.3 L335.5 340.6 M335.5 340.6 L340.0 338.0 M340.0 338.0 L344.6 339.3 M344.6 339.3 L348.5 345.2 M348.5 345.2 L353.7 341.3 M353.7 341.3 L357.6 348.4 M357.6 348.4 L362.2 366.7 M362.2 366.7 L366.1 366.7 M366.1 366.7 L371.3 367.3 M371.3 367.3 L376.5 355.6 M376.5 355.6 L380.4 350.4 M380.4 350.4 L389.5 356.9 M389.5 356.9 L397.3 355.0 M397.3 355.0 L405.1 360.2 M405.1 360.2 L411.0 362.8 M411.0 362.8 L414.9 359.5 M414.9 359.5 L420.8 358.2 M420.8 358.2 L428.6 341.3 M428.6 341.3 L433.8 338.7 M442.9 332.8 L447.5 343.2 M447.5 343.2 L451.4 342.6 M451.4 342.6 L457.2 347.8 M457.2 347.8 L464.0 346.5 M464.0 346.5 L469.2 346.5 M469.2 346.5 L474.4 355.0 M474.4 355.0 L478.3 355.6 M478.3 355.6 L483.5 358.9 M483.5 358.9 L487.4 360.8 M487.4 360.8 L492.6 384.9 M492.6 384.9 L496.6 379.0 M496.6 379.0 L503.1 379.7 M503.1 379.7 L508.9 381.0 M508.9 381.0 L514.8 368.6 M514.8 368.6 L518.7 372.5 M518.7 372.5 L523.9 375.1 M523.9 375.1 L531.7 370.6 M531.7 370.6 L536.9 387.5 M536.9 387.5 L539.5 388.8 M539.5 388.8 L547.3 388.2 M547.3 388.2 L553.8 381.6 M553.8 381.6 L559.1 384.2 M559.1 384.2 L564.3 381.0 M564.3 381.0 L568.8 366.7 M568.8 366.7 L576.0 375.1 M576.0 375.1 L581.8 369.9 M581.8 369.9 L585.7 376.4 M585.7 376.4 L592.9 349.7 M592.9 349.7 L599.4 346.5 M599.4 346.5 L604.0 352.3 M604.0 352.3 L608.5 350.4 M608.5 350.4 L614.0 349.1 M614.0 349.1 L617.3 347.8 M617.3 347.8 L621.2 340.6 M621.2 340.6 L626.4 335.4 M626.4 335.4 L630.3 338.0 M630.3 338.0 L635.5 335.4 M657.0 334.1 L661.5 341.9 M661.5 341.9 L670.0 341.9 M670.0 341.9 L675.8 353.0 M675.8 353.0 L684.3 356.3 M684.3 356.3 L688.9 366.7 M688.9 366.7 L693.4 365.4 M693.4 365.4 L697.3 350.4 M697.3 350.4 L702.5 345.2 M702.5 345.2 L706.4 349.1 M706.4 349.1 L711.0 342.6 M711.0 342.6 L715.6 353.0 M715.6 353.0 L723.4 362.1 M723.4 362.1 L727.9 365.4 M727.9 365.4 L733.1 361.5 M733.1 361.5 L737.7 367.3 M737.7 367.3 L745.5 360.2 M745.5 360.2 L751.1 367.3 M751.1 367.3 L755.6 359.5 M755.6 359.5 L760.2 358.9 M760.2 358.9 L764.1 370.0 M764.1 370.0 L769.3 376.4 M769.3 376.4 L773.9 377.1 M773.9 377.1 L778.4 381.0 M781.7 389.6 L788.2 379.0 M788.2 379.0 L792.1 380.3 M792.1 380.3 L796.0 378.4 M796.0 378.4 L800.5 378.4 M800.5 378.4 L805.8 384.9 M805.8 384.9 L809.0 388.8 M823.3 390.8 L827.2 386.8 M831.1 390.1 L836.4 377.1 M836.4 377.1 L841.6 387.5 M841.6 387.5 L846.8 388.8 M846.8 388.8 L852.0 388.0 M852.0 388.0 L860.0 385.0 M860.0 385.0 L868.0 388.0 M868.0 388.0 L874.0 380.0 M874.0 380.0 L878.0 387.0" fill="none" stroke="#f08c35" stroke-width="1.05" stroke-linejoin="round" stroke-linecap="round"/><path d="M433.8 338.7 L441.0 332.8 M441.0 332.8 L442.9 332.8 M635.5 335.4 L640.0 330.9 M640.0 330.9 L644.6 330.9 M644.6 330.9 L650.5 327.0 M650.5 327.0 L653.1 327.6 M653.1 327.6 L657.0 334.1" fill="none" stroke="#c040d0" stroke-width="1.05" stroke-linejoin="round" stroke-linecap="round"/><path d="M94.1 384.9 L97.3 390.0 M97.3 390.0 L103.8 389.5 M778.4 381.0 L781.7 389.6 M809.0 388.8 L813.6 396.6 M813.6 396.6 L818.8 391.4 M818.8 391.4 L823.3 390.8 M827.2 386.8 L831.1 390.1" fill="none" stroke="#28c030" stroke-width="1.05" stroke-linejoin="round" stroke-linecap="round"/><rect x="14" y="37" width="31" height="22" fill="#f0f0f0"/><rect x="14" y="37" width="31" height="4" fill="#d5d5d5"/><defs><linearGradient id="lr" x1="0" y1="0" x2="0" y2="1"><stop offset="0" stop-color="#f06a6a"/><stop offset="0.5" stop-color="#de2a2e"/><stop offset="1" stop-color="#b81c20"/></linearGradient><linearGradient id="lb" x1="0" y1="0" x2="0" y2="1"><stop offset="0" stop-color="#5ab8f0"/><stop offset="0.5" stop-color="#1e90d8"/><stop offset="1" stop-color="#1570b0"/></linearGradient></defs><rect x="18.5" y="45.5" width="9.5" height="9.5" rx="1.8" fill="url(#lr)" stroke="#8a1414" stroke-width="0.8"/><rect x="31.5" y="45.5" width="9.5" height="9.5" rx="1.8" fill="url(#lb)" stroke="#105a8a" stroke-width="0.8"/><rect x="45" y="38" width="244" height="13" fill="#3a414b"/><text x="45" y="49.5" font-family="Liberation Sans" font-size="11.4" fill="#e0282a" textLength="105.5" lengthAdjust="spacingAndGlyphs">ential_Moving_Average</text><text x="153.6" y="49.5" font-family="Liberation Sans" font-size="11.4" fill="#2a2ae6" textLength="134.5" lengthAdjust="spacingAndGlyphs">Exponential_Moving_Average</text><rect x="15" y="256" width="31" height="12" fill="#3a414b"/><text x="16.3" y="265.6" font-family="Liberation Sans" font-size="10" fill="#1d2090" textLength="28.2" lengthAdjust="spacingAndGlyphs">MACD</text><rect x="15" y="328" width="17" height="12" fill="#3a414b"/><text x="16.5" y="339" font-family="Liberation Sans" font-size="11" fill="#eca060" textLength="14.6" lengthAdjust="spacingAndGlyphs">RSI</text><path d="M15.5 374.5 H72.5 L74.5 376.5 V391.5 L72.5 393.5 H15.5 Z" fill="#5a6a7f" stroke="#a9bdcd" stroke-width="1"/><rect x="14" y="374" width="2" height="27" fill="#c4e6de"/><text x="21.7" y="388.2" font-family="Liberation Sans" font-size="11" fill="#f4f6f8" stroke="#f4f6f8" stroke-width="0.12" textLength="46.6" lengthAdjust="spacingAndGlyphs">Сен 2020</text><path d="M260.5 374.5 H317.5 L319.5 376.5 V391.5 L317.5 393.5 H260.5 Z" fill="#5a6a7f" stroke="#a9bdcd" stroke-width="1"/><rect x="259" y="374" width="2" height="27" fill="#c4e6de"/><text x="267.3" y="388.2" font-family="Liberation Sans" font-size="11" fill="#f4f6f8" stroke="#f4f6f8" stroke-width="0.12" textLength="46.0" lengthAdjust="spacingAndGlyphs">Окт 2020</text><path d="M850.5 374.5 H909.5 L911.5 376.5 V391.5 L909.5 393.5 H850.5 Z" fill="#5a6a7f" stroke="#a9bdcd" stroke-width="1"/><rect x="849" y="374" width="2" height="27" fill="#c4e6de"/><text x="857.4" y="388.2" font-family="Liberation Sans" font-size="11" fill="#f4f6f8" stroke="#f4f6f8" stroke-width="0.12" textLength="46.8" lengthAdjust="spacingAndGlyphs">Нов 2020</text></svg></body></html>
